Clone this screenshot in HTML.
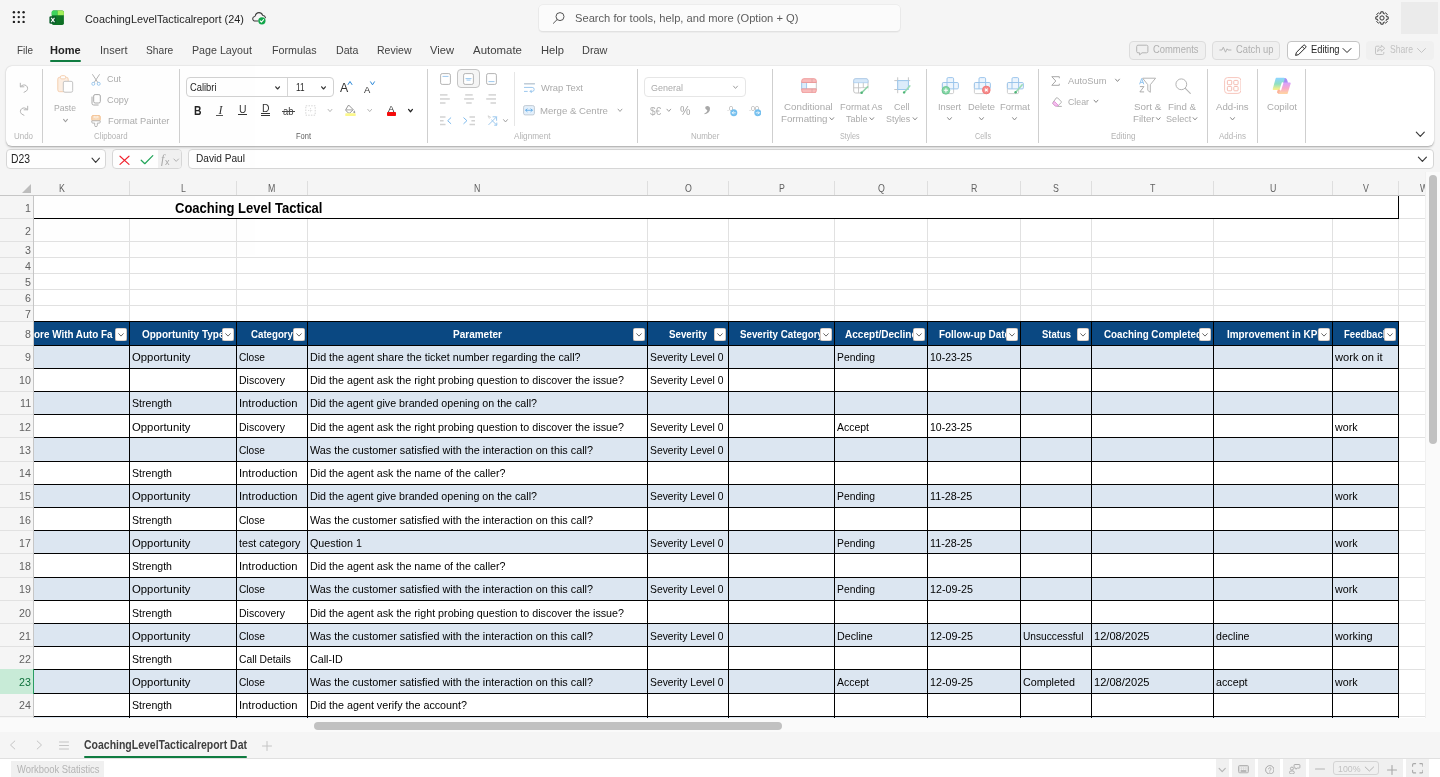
<!DOCTYPE html>
<html lang="en"><head><meta charset="utf-8"><title>CoachingLevelTacticalreport (24)</title>
<style>
html,body{margin:0;padding:0;background:#f5f5f5}
#app{position:absolute;left:0;top:0;width:1440px;height:777px;overflow:hidden;will-change:opacity;opacity:.9999}
body{width:1440px;height:777px;overflow:hidden;background:#f5f5f5;position:relative;font-family:"Liberation Sans",sans-serif;}
.b{position:absolute;box-sizing:border-box;display:block}
.t{position:absolute;white-space:nowrap;line-height:1;transform-origin:0 0;display:block}
</style></head>
<body>
<div id="app">
<svg class="b" style="left:0px;top:0px;" width="40" height="36" viewBox="0 0 40 36" fill="none"><circle cx="13.90" cy="12.30" r="1.2" fill="#1f1f1f"/><circle cx="18.75" cy="12.30" r="1.2" fill="#1f1f1f"/><circle cx="23.60" cy="12.30" r="1.2" fill="#1f1f1f"/><circle cx="13.90" cy="17.10" r="1.2" fill="#1f1f1f"/><circle cx="18.75" cy="17.10" r="1.2" fill="#1f1f1f"/><circle cx="23.60" cy="17.10" r="1.2" fill="#1f1f1f"/><circle cx="13.90" cy="21.90" r="1.2" fill="#1f1f1f"/><circle cx="18.75" cy="21.90" r="1.2" fill="#1f1f1f"/><circle cx="23.60" cy="21.90" r="1.2" fill="#1f1f1f"/></svg>
<svg class="b" style="left:48.5px;top:9.5px;" width="16" height="16" viewBox="0 0 16 16" fill="none"><defs><linearGradient id="xg" x1="0" y1="0" x2="1" y2="1"><stop offset="0" stop-color="#16872f"/><stop offset="1" stop-color="#0b6a22"/></linearGradient></defs><rect x="2.750" y=".4" width="12.150" height="14.500" rx="1.700" fill="url(#xg)"/><path d="M2.750 5.200V2.100a1.700 1.700 0 0 1 1.700-1.700H8.600v4.800z" fill="#3dd35d"/><path d="M8.600 .4h4.600a1.700 1.700 0 0 1 1.700 1.700v3.100H8.600z" fill="#a2ef5b"/><rect x=".4" y="6.300" width="6.900" height="7.400" rx="1.300" fill="#0c5e2c"/><path d="M2.200 7.900l3.300 4.200M5.500 7.900l-3.300 4.200" stroke="#fff" stroke-width="1.050"/></svg>
<span class="t " style="left:85.00px;top:13.60px;font-size:11.4px;color:#242424;transform:scaleX(0.9540);">CoachingLevelTacticalreport (24)</span>
<svg class="b" style="left:250px;top:9px;" width="18" height="16" viewBox="0 0 18 16" fill="none"><path d="M8 12H5.300C3.700 12 2.700 10.900 2.700 9.700c0-1.100.8-2 1.900-2.200.300-.1.500-.3.600-.6C5.700 4.900 7.200 3.600 9 3.600c1.600 0 3 1 3.500 2.400.1.300.4.500.7.600 1.100.2 2 1.100 2.300 2.200" stroke="#3a3a3a" stroke-width="1.050" stroke-linecap="round" stroke-linejoin="round"/><circle cx="11.900" cy="11.800" r="3.650" fill="#12a64a"/><path d="M10.200 11.900l1.200 1.200 2.200-2.500" stroke="#fff" stroke-width="1.050" stroke-linecap="round" stroke-linejoin="round"/></svg>
<div class="b " style="left:539px;top:5px;width:360.5px;height:26px;background:#fbfbfb;border-radius:4px;box-shadow:0 0 0 .6px #e6e6e6,0 1px 2px rgba(0,0,0,.14)"></div>
<svg class="b" style="left:552px;top:11px;" width="14" height="14" viewBox="0 0 14 14" fill="none"><circle cx="8" cy="5.6" r="4" stroke="#555" stroke-width="1"/><path d="M5.1 8.6L1.4 12.3" stroke="#555" stroke-width="1" stroke-linecap="round"/></svg>
<span class="t " style="left:575.00px;top:12.60px;font-size:11.4px;color:#5c5c5c;transform:scaleX(0.9788);">Search for tools, help, and more (Option + Q)</span>
<svg class="b" style="left:1375.4px;top:10.5px;" width="14" height="14" viewBox="0 0 14 14" fill="none"><circle cx="7" cy="7" r="2.1" stroke="#333" stroke-width="1"/><path d="M13.18 5.80L13.18 8.20L11.54 8.22L11.07 9.35L12.22 10.52L10.52 12.22L9.35 11.07L8.22 11.54L8.20 13.18L5.80 13.18L5.78 11.54L4.65 11.07L3.48 12.22L1.78 10.52L2.93 9.35L2.46 8.22L0.82 8.20L0.82 5.80L2.46 5.78L2.93 4.65L1.78 3.48L3.48 1.78L4.65 2.93L5.78 2.46L5.80 0.82L8.20 0.82L8.22 2.46L9.35 2.93L10.52 1.78L12.22 3.48L11.07 4.65L11.54 5.78Z" stroke="#333" stroke-width="1" stroke-linejoin="round"/></svg>
<div class="b " style="left:1401px;top:2px;width:37px;height:32px;background:#ebebeb"></div>
<span class="t " style="left:17.00px;top:44.60px;font-size:11.4px;color:#424242;transform:scaleX(0.8710);">File</span>
<span class="t " style="left:99.50px;top:44.60px;font-size:11.4px;color:#424242;transform:scaleX(0.9645);">Insert</span>
<span class="t " style="left:145.70px;top:44.60px;font-size:11.4px;color:#424242;transform:scaleX(0.8974);">Share</span>
<span class="t " style="left:192.00px;top:44.60px;font-size:11.4px;color:#424242;transform:scaleX(0.9372);">Page Layout</span>
<span class="t " style="left:272.00px;top:44.60px;font-size:11.4px;color:#424242;transform:scaleX(0.9408);">Formulas</span>
<span class="t " style="left:335.50px;top:44.60px;font-size:11.4px;color:#424242;transform:scaleX(0.9344);">Data</span>
<span class="t " style="left:377.00px;top:44.60px;font-size:11.4px;color:#424242;transform:scaleX(0.9230);">Review</span>
<span class="t " style="left:430.00px;top:44.60px;font-size:11.4px;color:#424242;transform:scaleX(0.9794);">View</span>
<span class="t " style="left:472.50px;top:44.60px;font-size:11.4px;color:#424242;transform:scaleX(1.0042);">Automate</span>
<span class="t " style="left:540.50px;top:44.60px;font-size:11.4px;color:#424242;transform:scaleX(0.9810);">Help</span>
<span class="t " style="left:582.00px;top:44.60px;font-size:11.4px;color:#424242;transform:scaleX(0.9585);">Draw</span>
<span class="t " style="left:50.00px;top:44.60px;font-size:11.4px;color:#242424;transform:scaleX(0.9693);font-weight:700;">Home</span>
<div class="b " style="left:50px;top:60px;width:31px;height:2.2px;background:#107c41;border-radius:1px"></div>
<div class="b " style="left:1129px;top:41px;width:77px;height:19px;background:#f0f0f0;border:1px solid #dcdcdc;border-radius:4px"></div>
<svg class="b" style="left:1136px;top:43.6px;" width="13" height="12" viewBox="0 0 13 12" fill="none"><path d="M2 1.2h8.6a1.3 1.3 0 0 1 1.3 1.3v5a1.3 1.3 0 0 1-1.3 1.3H6L3.6 10.9V8.8H2A1.3 1.3 0 0 1 .7 7.5v-5A1.3 1.3 0 0 1 2 1.2z" stroke="#b4b4b4" stroke-width="1" stroke-linejoin="round"/></svg>
<span class="t " style="left:1152.50px;top:43.80px;font-size:11px;color:#b0b0b0;transform:scaleX(0.8556);">Comments</span>
<div class="b " style="left:1212px;top:41px;width:68px;height:19px;background:#f0f0f0;border:1px solid #dcdcdc;border-radius:4px"></div>
<svg class="b" style="left:1219px;top:44.6px;" width="13" height="10" viewBox="0 0 13 10" fill="none"><path d="M.8 5h2.2l1.3-2.8 2.2 5 1.6-3.4.9 1.2h3" stroke="#b4b4b4" stroke-width="1" stroke-linejoin="round" stroke-linecap="round"/></svg>
<span class="t " style="left:1235.50px;top:43.80px;font-size:11px;color:#b0b0b0;transform:scaleX(0.8517);">Catch up</span>
<div class="b " style="left:1287px;top:41px;width:73px;height:19px;background:#fff;border:1px solid #c4c4c4;border-radius:4px"></div>
<svg class="b" style="left:1294px;top:44px;" width="13" height="13" viewBox="0 0 13 13" fill="none"><path d="M1.6 11.4l.8-3L9.3 1.5a1.3 1.3 0 0 1 1.9 0l.3.3a1.3 1.3 0 0 1 0 1.9L4.6 10.600z" stroke="#242424" stroke-width="1" stroke-linejoin="round"/><path d="M8.3 2.6l2.1 2.1" stroke="#242424" stroke-width="1"/></svg>
<span class="t " style="left:1310.50px;top:43.80px;font-size:11px;color:#242424;transform:scaleX(0.8473);">Editing</span>
<svg class="b" style="left:0;top:0" width="1440" height="777" viewBox="0 0 1440 777" fill="none"><path d="M1343.00 48.50L1347.00 52.50L1351.00 48.50" stroke="#242424" stroke-width="1" stroke-linecap="round" stroke-linejoin="round"/></svg>
<div class="b " style="left:1366px;top:41px;width:68px;height:19px;background:#f0f0f0;border-radius:4px"></div>
<svg class="b" style="left:1374.3px;top:43.8px;" width="12" height="12" viewBox="0 0 12 12" fill="none"><path d="M5 2.2H2.8A1.3 1.3 0 0 0 1.500 3.5v5.700a1.300 1.300 0 0 0 1.300 1.300h5.700a1.300 1.300 0 0 0 1.300-1.300V8.300" stroke="#c4c4c4" stroke-width="1" stroke-linecap="round"/><path d="M7.3 1.300l3.500 3-3.500 3V5.600C5.500 5.600 4.400 6.200 3.600 7.600c0-2.500 1.400-4.300 3.700-4.500z" stroke="#c4c4c4" stroke-width="1" stroke-linejoin="round"/></svg>
<span class="t " style="left:1390.00px;top:43.80px;font-size:11px;color:#c2c2c2;transform:scaleX(0.7835);">Share</span>
<svg class="b" style="left:0;top:0" width="1440" height="777" viewBox="0 0 1440 777" fill="none"><path d="M1417.50 48.50L1421.50 52.50L1425.50 48.50" stroke="#c4c4c4" stroke-width="1" stroke-linecap="round" stroke-linejoin="round"/></svg>
<div class="b " style="left:6px;top:149px;width:100px;height:20px;background:#fff;border:1px solid #d6d6d6;border-radius:4px"></div>
<span class="t " style="left:10.50px;top:153.30px;font-size:12px;color:#242424;transform:scaleX(0.8631);">D23</span>
<svg class="b" style="left:0;top:0" width="1440" height="777" viewBox="0 0 1440 777" fill="none"><path d="M92.00 158.20L95.70 162.40L99.40 158.20" stroke="#3a3a3a" stroke-width="1.1" stroke-linecap="round" stroke-linejoin="round"/></svg>
<div class="b " style="left:112px;top:149px;width:70px;height:20px;background:#fff;border:1px solid #d6d6d6;border-radius:4px;overflow:hidden"></div>
<div class="b " style="left:158px;top:150px;width:23px;height:18px;background:#f0f0f0;border-radius:0 3px 3px 0"></div>
<svg class="b" style="left:119px;top:154.5px;" width="12" height="11" viewBox="0 0 12 11" fill="none"><path d="M1 1.200l9 8.200M10 1.200L1 9.400" stroke="#f0202c" stroke-width="1.150" stroke-linecap="round"/></svg>
<svg class="b" style="left:139.5px;top:154px;" width="14" height="11" viewBox="0 0 14 11" fill="none"><path d="M1.200 6.200l3.600 3.500L12.800 1.600" stroke="#22a559" stroke-width="1.250" stroke-linecap="round" stroke-linejoin="round"/></svg>
<span class="t " style="left:161.00px;top:153.30px;font-size:12px;color:#a6a6a6;transform:scaleX(1.0000);font-style:italic;font-family:Liberation Serif,serif;">f</span>
<span class="t " style="left:165.00px;top:157.80px;font-size:9px;color:#a6a6a6;transform:scaleX(1.0000);">x</span>
<svg class="b" style="left:0;top:0" width="1440" height="777" viewBox="0 0 1440 777" fill="none"><path d="M173.90 159.00L176.20 161.40L178.50 159.00" stroke="#b0b0b0" stroke-width="1" stroke-linecap="round" stroke-linejoin="round"/></svg>
<div class="b " style="left:188px;top:149px;width:1246px;height:20px;background:#fff;border:1px solid #d6d6d6;border-radius:4px"></div>
<span class="t " style="left:196.00px;top:152.80px;font-size:11px;color:#242424;transform:scaleX(0.9211);">David Paul</span>
<svg class="b" style="left:0;top:0" width="1440" height="777" viewBox="0 0 1440 777" fill="none"><path d="M1418.40 157.15L1422.40 161.45L1426.40 157.15" stroke="#3a3a3a" stroke-width="1.15" stroke-linecap="round" stroke-linejoin="round"/></svg>
<div class="b " style="left:6px;top:66px;width:1428px;height:80px;background:#fff;border-radius:6px;box-shadow:0 .5px 1.5px rgba(0,0,0,.22),0 1.5px 3px rgba(0,0,0,.10)"></div>
<div class="b " style="left:42px;top:69px;width:1px;height:74px;background:#cfcfcf"></div>
<div class="b " style="left:179px;top:69px;width:1px;height:74px;background:#cfcfcf"></div>
<div class="b " style="left:427px;top:69px;width:1px;height:74px;background:#cfcfcf"></div>
<div class="b " style="left:637px;top:69px;width:1px;height:74px;background:#cfcfcf"></div>
<div class="b " style="left:772px;top:69px;width:1px;height:74px;background:#cfcfcf"></div>
<div class="b " style="left:926px;top:69px;width:1px;height:74px;background:#cfcfcf"></div>
<div class="b " style="left:1038px;top:69px;width:1px;height:74px;background:#cfcfcf"></div>
<div class="b " style="left:1207px;top:69px;width:1px;height:74px;background:#cfcfcf"></div>
<div class="b " style="left:1257px;top:69px;width:1px;height:74px;background:#cfcfcf"></div>
<div class="b " style="left:1305px;top:69px;width:1px;height:74px;background:#cfcfcf"></div>
<div class="b " style="left:514px;top:72px;width:1px;height:54px;background:#e6e6e6"></div>
<span class="t " style="left:14.00px;top:131.80px;font-size:9px;color:#b4b4b4;transform:scaleX(0.8831);">Undo</span>
<span class="t " style="left:93.50px;top:131.80px;font-size:9px;color:#b4b4b4;transform:scaleX(0.8696);">Clipboard</span>
<span class="t " style="left:295.70px;top:131.80px;font-size:9px;color:#616161;transform:scaleX(0.8329);">Font</span>
<span class="t " style="left:514.00px;top:131.80px;font-size:9px;color:#b4b4b4;transform:scaleX(0.9120);">Alignment</span>
<span class="t " style="left:690.70px;top:131.80px;font-size:9px;color:#b4b4b4;transform:scaleX(0.8841);">Number</span>
<span class="t " style="left:839.50px;top:131.80px;font-size:9px;color:#b4b4b4;transform:scaleX(0.7956);">Styles</span>
<span class="t " style="left:974.50px;top:131.80px;font-size:9px;color:#b4b4b4;transform:scaleX(0.7998);">Cells</span>
<span class="t " style="left:1110.50px;top:131.80px;font-size:9px;color:#b4b4b4;transform:scaleX(0.8903);">Editing</span>
<span class="t " style="left:1219.00px;top:131.80px;font-size:9px;color:#b4b4b4;transform:scaleX(0.8848);">Add-ins</span>
<svg class="b" style="left:19px;top:81.5px;" width="10" height="11" viewBox="0 0 10 11" fill="none"><path d="M1.300 1.200v3.600h3.600" stroke="#b4b4b4" stroke-width="1" stroke-linecap="round" stroke-linejoin="round"/><path d="M1.600 4.600C3 2.800 5.600 2.300 7.300 3.700c1.700 1.400 1.700 3.800.2 5.200L5 10.300" stroke="#b4b4b4" stroke-width="1" stroke-linecap="round"/></svg>
<svg class="b" style="left:19px;top:104.5px;" width="10" height="11" viewBox="0 0 10 11" fill="none"><path d="M8.700 1.200v3.600H5.100" stroke="#b4b4b4" stroke-width="1" stroke-linecap="round" stroke-linejoin="round"/><path d="M8.400 4.600C7 2.800 4.400 2.300 2.700 3.700 1 5.100 1 7.500 2.500 8.900L5 10.300" stroke="#b4b4b4" stroke-width="1" stroke-linecap="round"/></svg>
<svg class="b" style="left:56.5px;top:74.5px;" width="17" height="18" viewBox="0 0 17 18" fill="none"><rect x=".8" y="2.300" width="10.400" height="14.400" rx="1.800" fill="#fdeee2" stroke="#f6cfb0" stroke-width="1"/><rect x="3.300" y=".7" width="5.400" height="3.200" rx="1.500" fill="#fff" stroke="#f6cfb0" stroke-width="1"/><rect x="6.300" y="6.300" width="9.400" height="10.900" rx="1.600" fill="#fff" stroke="#c2c2c2" stroke-width="1"/></svg>
<span class="t " style="left:53.70px;top:103.00px;font-size:9.6px;color:#ababab;transform:scaleX(0.8962);">Paste</span>
<svg class="b" style="left:0;top:0" width="1440" height="777" viewBox="0 0 1440 777" fill="none"><path d="M63.60 119.45L65.50 121.75L67.40 119.45" stroke="#9c9c9c" stroke-width="1.1" stroke-linecap="round" stroke-linejoin="round"/></svg>
<svg class="b" style="left:90.5px;top:73.5px;" width="10" height="12" viewBox="0 0 10 12" fill="none"><path d="M1.600 .6l5.300 8M8.400 .6L3.100 8.600" stroke="#b4b4b4" stroke-width="1" stroke-linecap="round"/><circle cx="2.300" cy="9.800" r="1.500" stroke="#9cc8ee" stroke-width="1"/><circle cx="7.700" cy="9.800" r="1.500" stroke="#9cc8ee" stroke-width="1"/></svg>
<span class="t " style="left:107.00px;top:74.00px;font-size:9.6px;color:#ababab;transform:scaleX(0.9371);">Cut</span>
<svg class="b" style="left:90.5px;top:93.5px;" width="10" height="12" viewBox="0 0 10 12" fill="none"><rect x="2.700" y=".6" width="6.600" height="8.400" rx="1.400" stroke="#a8a8a8" stroke-width="1"/><path d="M1 3v6.300a1.700 1.700 0 0 0 1.700 1.700H7.200" stroke="#a8a8a8" stroke-width="1" stroke-linecap="round"/></svg>
<span class="t " style="left:107.00px;top:95.00px;font-size:9.6px;color:#ababab;transform:scaleX(0.9593);">Copy</span>
<svg class="b" style="left:90.5px;top:114.5px;" width="10" height="12" viewBox="0 0 10 12" fill="none"><rect x=".8" y=".6" width="8.400" height="5.200" rx="1" fill="#f9d9b8" stroke="#f3bd8c" stroke-width="1"/><path d="M3.200 .8v2M5 .8v2.600M6.800 .8v2" stroke="#fff" stroke-width=".8"/><path d="M.8 5.800h8.400v1.300a1 1 0 0 1-1 1H6.300v2.300a1.300 1.300 0 0 1-2.600 0V8.100H1.800a1 1 0 0 1-1-1z" fill="#fff" stroke="#b4b4b4" stroke-width="1" stroke-linejoin="round"/></svg>
<span class="t " style="left:107.50px;top:116.00px;font-size:9.6px;color:#ababab;transform:scaleX(0.9687);">Format Painter</span>
<div class="b " style="left:186px;top:77px;width:148px;height:20px;background:#fff;border:1px solid #d1d1d1;border-radius:4px"></div>
<div class="b " style="left:287px;top:78px;width:1px;height:18px;background:#d6d6d6"></div>
<span class="t " style="left:190.00px;top:82.05px;font-size:10.5px;color:#242424;transform:scaleX(0.8905);">Calibri</span>
<svg class="b" style="left:0;top:0" width="1440" height="777" viewBox="0 0 1440 777" fill="none"><path d="M275.70 86.80L277.60 89.00L279.50 86.80" stroke="#333" stroke-width="1.15" stroke-linecap="round" stroke-linejoin="round"/></svg>
<span class="t " style="left:295.50px;top:82.05px;font-size:10.5px;color:#242424;transform:scaleX(0.7798);">11</span>
<svg class="b" style="left:0;top:0" width="1440" height="777" viewBox="0 0 1440 777" fill="none"><path d="M321.60 86.80L323.50 89.00L325.40 86.80" stroke="#333" stroke-width="1.15" stroke-linecap="round" stroke-linejoin="round"/></svg>
<span class="t " style="left:340.40px;top:82.05px;font-size:12.5px;color:#333;transform:scaleX(0.9835);">A</span>
<svg class="b" style="left:0;top:0" width="1440" height="777" viewBox="0 0 1440 777" fill="none"><path d="M348.05 84.50L350.00 81.50L351.95 84.50" stroke="#2b88d8" stroke-width="1" stroke-linecap="round" stroke-linejoin="round"/></svg>
<span class="t " style="left:363.50px;top:84.90px;font-size:9.8px;color:#333;transform:scaleX(0.9638);">A</span>
<svg class="b" style="left:0;top:0" width="1440" height="777" viewBox="0 0 1440 777" fill="none"><path d="M370.55 81.80L372.50 84.80L374.45 81.80" stroke="#2b88d8" stroke-width="1" stroke-linecap="round" stroke-linejoin="round"/></svg>
<span class="t " style="left:193.50px;top:105.05px;font-size:12.5px;color:#242424;transform:scaleX(0.8308);font-weight:700;">B</span>
<span class="t " style="left:218.50px;top:104.30px;font-size:12px;color:#333;transform:scaleX(1.0000);font-style:italic;font-family:Liberation Serif,serif;">I</span>
<div class="b " style="left:216px;top:114.6px;width:7px;height:1px;background:#555"></div>
<span class="t " style="left:238.50px;top:104.05px;font-size:10.5px;color:#333;transform:scaleX(0.9891);">U</span>
<div class="b " style="left:237.7px;top:114.2px;width:9.2px;height:1px;background:#333"></div>
<span class="t " style="left:261.50px;top:103.05px;font-size:10.5px;color:#333;transform:scaleX(0.9891);">D</span>
<div class="b " style="left:260.5px;top:112.8px;width:9.5px;height:1px;background:#333"></div>
<div class="b " style="left:260.5px;top:114.8px;width:9.5px;height:1px;background:#333"></div>
<span class="t " style="left:283.00px;top:106.05px;font-size:10.5px;color:#444;transform:scaleX(0.8990);">ab</span>
<div class="b " style="left:282px;top:110.5px;width:12.5px;height:1px;background:#444"></div>
<svg class="b" style="left:304.5px;top:105px;" width="11" height="11" viewBox="0 0 11 11" fill="none"><rect x=".8" y=".8" width="9.400" height="9.400" stroke="#d6d6d6" stroke-width="1" stroke-dasharray="1.500 1.200"/><path d="M5.500 3v5M3 5.500h5" stroke="#dedede" stroke-width="1" stroke-dasharray="1.200 1.200"/></svg>
<svg class="b" style="left:0;top:0" width="1440" height="777" viewBox="0 0 1440 777" fill="none"><path d="M328.10 109.40L330.00 111.60L331.90 109.40" stroke="#b4b4b4" stroke-width="1" stroke-linecap="round" stroke-linejoin="round"/></svg>
<svg class="b" style="left:345px;top:104px;" width="11" height="12" viewBox="0 0 11 12" fill="none"><path d="M3.600 1l4.600 4.600-3.400 3.400a1 1 0 0 1-1.400 0L1 6.600a1 1 0 0 1 0-1.400z" fill="#fff" stroke="#8a8a8a" stroke-width=".9" stroke-linejoin="round"/><path d="M.9 5.900h7" stroke="#8a8a8a" stroke-width=".8"/><path d="M9.300 6.200c.6.900 1 1.500 1 2a1 1 0 0 1-2 0c0-.5.400-1.100 1-2z" fill="#a0a0a0"/><rect x=".3" y="9.300" width="10.400" height="2.700" rx=".6" fill="#fbf78c"/></svg>
<svg class="b" style="left:0;top:0" width="1440" height="777" viewBox="0 0 1440 777" fill="none"><path d="M367.80 109.40L369.70 111.60L371.60 109.40" stroke="#b4b4b4" stroke-width="1" stroke-linecap="round" stroke-linejoin="round"/></svg>
<span class="t " style="left:388.20px;top:104.65px;font-size:9.3px;color:#333;transform:scaleX(1.0156);">A</span>
<div class="b " style="left:386.5px;top:112.2px;width:9.6px;height:3.6px;background:#f40b0b;border-radius:.8px"></div>
<svg class="b" style="left:0;top:0" width="1440" height="777" viewBox="0 0 1440 777" fill="none"><path d="M408.55 109.45L410.50 111.75L412.45 109.45" stroke="#242424" stroke-width="1.25" stroke-linecap="round" stroke-linejoin="round"/></svg>
<svg class="b" style="left:440px;top:72.8px;" width="11" height="12" viewBox="0 0 11 12" fill="none"><rect x=".6" y=".6" width="9.800" height="10.800" rx="1.600" fill="#fff" stroke="#b4b4b4" stroke-width="1"/><path d="M2.500 3.4h6" stroke="#9cc8ee" stroke-width="1"/></svg>
<div class="b " style="left:457px;top:69px;width:23px;height:18.8px;background:#f5f5f5;border:1px solid #c4c4c4;border-radius:4px"></div>
<svg class="b" style="left:463px;top:72.8px;" width="11" height="12" viewBox="0 0 11 12" fill="none"><rect x=".6" y=".6" width="9.800" height="10.800" rx="1.600" fill="#fff" stroke="#b4b4b4" stroke-width="1"/><path d="M2.500 5.6h6" stroke="#9cc8ee" stroke-width="1"/><path d="M3.500 7.1h4" stroke="#9cc8ee" stroke-width="1"/></svg>
<svg class="b" style="left:485.5px;top:72.8px;" width="11" height="12" viewBox="0 0 11 12" fill="none"><rect x=".6" y=".6" width="9.800" height="10.800" rx="1.600" fill="#fff" stroke="#b4b4b4" stroke-width="1"/><path d="M2.500 8.6h6" stroke="#9cc8ee" stroke-width="1"/></svg>
<svg class="b" style="left:440.3px;top:93.6px;" width="10" height="10" viewBox="0 0 10 10" fill="none"><path d="M0.0 0.90h7.5" stroke="#d2d2d2" stroke-width="1.500"/><path d="M0.0 4.95h9.8" stroke="#d2d2d2" stroke-width="1.500"/><path d="M0.0 9.00h5.5" stroke="#d2d2d2" stroke-width="1.500"/></svg>
<svg class="b" style="left:463.5px;top:93.6px;" width="10" height="10" viewBox="0 0 10 10" fill="none"><path d="M1.2 0.90h7.5" stroke="#d2d2d2" stroke-width="1.500"/><path d="M0.1 4.95h9.8" stroke="#d2d2d2" stroke-width="1.500"/><path d="M2.2 9.00h5.5" stroke="#d2d2d2" stroke-width="1.500"/></svg>
<svg class="b" style="left:486.3px;top:93.6px;" width="10" height="10" viewBox="0 0 10 10" fill="none"><path d="M2.5 0.90h7.5" stroke="#d2d2d2" stroke-width="1.500"/><path d="M0.2 4.95h9.8" stroke="#d2d2d2" stroke-width="1.500"/><path d="M4.5 9.00h5.5" stroke="#d2d2d2" stroke-width="1.500"/></svg>
<svg class="b" style="left:440px;top:115.5px;" width="12" height="10" viewBox="0 0 12 10" fill="none"><path d="M0 .9h5.500M0 4.700h3.600M0 8.500h5.500" stroke="#d2d2d2" stroke-width="1.500"/><path d="M10.800 1.800L7.700 4.700l3.100 2.900" stroke="#7cb9ec" stroke-width="1" stroke-linecap="round" stroke-linejoin="round"/></svg>
<svg class="b" style="left:462.5px;top:115.5px;" width="12" height="10" viewBox="0 0 12 10" fill="none"><path d="M6.500 .9h5.500M8.400 4.700h3.600M6.500 8.500h5.500" stroke="#d2d2d2" stroke-width="1.500"/><path d="M.8 1.800l3.100 2.900L.8 7.600" stroke="#7cb9ec" stroke-width="1" stroke-linecap="round" stroke-linejoin="round"/></svg>
<svg class="b" style="left:486.5px;top:115px;" width="11" height="11" viewBox="0 0 11 11" fill="none"><path d="M1 .8l2.600 1.300-1.300 1.300z" stroke="#c8c8c8" stroke-width=".7"/><path d="M1.800 9.600L9.400 2M6 1.800h3.600v3.600" stroke="#9cc8ee" stroke-width="1" stroke-linecap="round" stroke-linejoin="round"/><path d="M4.600 5l5 5M7.600 10.200h2.200V8" stroke="#9cc8ee" stroke-width="1" stroke-linecap="round" stroke-linejoin="round"/></svg>
<svg class="b" style="left:0;top:0" width="1440" height="777" viewBox="0 0 1440 777" fill="none"><path d="M503.55 119.65L505.50 121.95L507.45 119.65" stroke="#a0a0a0" stroke-width="1" stroke-linecap="round" stroke-linejoin="round"/></svg>
<svg class="b" style="left:523.5px;top:82.5px;" width="11" height="10" viewBox="0 0 11 10" fill="none"><path d="M.3 .8h10.400M.3 4.400h7.900a2 2 0 0 1 0 4H6.300M.3 8.400h3" stroke="#9cc8ee" stroke-width="1" stroke-linecap="round"/><path d="M7.400 7.100L6.100 8.400l1.300 1.300" stroke="#9cc8ee" stroke-width="1" stroke-linecap="round" stroke-linejoin="round"/><path d="M.3 .8h10.400" stroke="#c8c8c8" stroke-width="1"/></svg>
<span class="t " style="left:540.50px;top:83.00px;font-size:9.6px;color:#ababab;transform:scaleX(0.9799);">Wrap Text</span>
<svg class="b" style="left:522.5px;top:105px;" width="12" height="10.5" viewBox="0 0 12 10.5" fill="none"><rect x=".6" y=".6" width="10.800" height="9.300" rx="1.600" fill="#e4f0fb" stroke="#c2cbd4" stroke-width="1"/><path d="M2.700 5.250h6.600M4.100 3.900L2.700 5.250l1.400 1.350M7.900 3.900l1.400 1.350L7.900 6.600" stroke="#5ea9e6" stroke-width=".9" stroke-linecap="round" stroke-linejoin="round"/></svg>
<span class="t " style="left:540.00px;top:106.00px;font-size:9.6px;color:#ababab;transform:scaleX(1.0035);">Merge &amp; Centre</span>
<svg class="b" style="left:0;top:0" width="1440" height="777" viewBox="0 0 1440 777" fill="none"><path d="M618.05 109.15L620.00 111.45L621.95 109.15" stroke="#a0a0a0" stroke-width="1" stroke-linecap="round" stroke-linejoin="round"/></svg>
<div class="b " style="left:644px;top:77px;width:102px;height:19.6px;background:#fff;border:1px solid #e6e6e6;border-radius:4px"></div>
<span class="t " style="left:651.00px;top:83.00px;font-size:9.6px;color:#ababab;transform:scaleX(0.9369);">General</span>
<svg class="b" style="left:0;top:0" width="1440" height="777" viewBox="0 0 1440 777" fill="none"><path d="M733.55 86.15L735.50 88.45L737.45 86.15" stroke="#a0a0a0" stroke-width="1" stroke-linecap="round" stroke-linejoin="round"/></svg>
<span class="t " style="left:649.50px;top:106.05px;font-size:10.5px;color:#b0b0b0;transform:scaleX(0.9589);">$€</span>
<svg class="b" style="left:0;top:0" width="1440" height="777" viewBox="0 0 1440 777" fill="none"><path d="M666.90 109.20L668.80 111.40L670.70 109.20" stroke="#a0a0a0" stroke-width="1" stroke-linecap="round" stroke-linejoin="round"/></svg>
<span class="t " style="left:680.00px;top:105.30px;font-size:12px;color:#a6a6a6;transform:scaleX(0.9841);">%</span>
<span class="t " style="left:704.30px;top:87.80px;font-size:27px;color:#a8a8a8;transform:scaleX(1.0000);font-weight:700;font-family:Liberation Serif,serif;">,</span>
<span class="t " style="left:727.00px;top:104.80px;font-size:8px;color:#b0b0b0;transform:scaleX(0.9293);">.0</span>
<svg class="b" style="left:730.4px;top:109.3px;" width="7.6" height="7.6" viewBox="0 0 7.6 7.6" fill="none"><circle cx="3.800" cy="3.800" r="3.500" fill="#74bfee"/><path d="M5.400 3.800H2.300M3.500 2.600L2.300 3.800l1.200 1.200" stroke="#fff" stroke-width=".8" stroke-linecap="round" stroke-linejoin="round"/></svg>
<span class="t " style="left:749.30px;top:104.80px;font-size:8px;color:#b0b0b0;transform:scaleX(0.8992);">.00</span>
<svg class="b" style="left:753.5px;top:109.3px;" width="7.6" height="7.6" viewBox="0 0 7.6 7.6" fill="none"><circle cx="3.800" cy="3.800" r="3.500" fill="#74bfee"/><path d="M2.200 3.800h3.100M4.100 2.600l1.200 1.200-1.200 1.200" stroke="#fff" stroke-width=".8" stroke-linecap="round" stroke-linejoin="round"/></svg>
<svg class="b" style="left:800.5px;top:77.7px;" width="16" height="15.6" viewBox="0 0 16 15.6" fill="none"><rect x=".7" y="4.500" width="14.600" height="6.400" fill="#fff" stroke="#c6c6c6" stroke-width=".9"/><rect x=".7" y="4.500" width="4.900" height="6.400" fill="#dcecfa" stroke="#9cc8ee" stroke-width=".9"/><path d="M.7 4.500V2.900a2.200 2.200 0 0 1 2.200-2.200h10.200a2.200 2.200 0 0 1 2.200 2.200v1.600z" fill="#f8bcbc" stroke="#ee9696" stroke-width=".9"/><path d="M.7 10.900v1.800a2.200 2.200 0 0 0 2.200 2.200h10.200a2.200 2.200 0 0 0 2.200-2.200v-1.800z" fill="#f8bcbc" stroke="#ee9696" stroke-width=".9"/><path d="M11 .9v3.600M11 10.900v3.800" stroke="#d9a3a3" stroke-width=".8"/></svg>
<span class="t " style="left:783.70px;top:102.00px;font-size:9.6px;color:#ababab;transform:scaleX(1.0159);">Conditional</span>
<span class="t " style="left:781.00px;top:114.00px;font-size:9.6px;color:#ababab;transform:scaleX(1.0135);">Formatting</span>
<svg class="b" style="left:0;top:0" width="1440" height="777" viewBox="0 0 1440 777" fill="none"><path d="M829.90 117.70L831.80 119.90L833.70 117.70" stroke="#8a8a8a" stroke-width="1" stroke-linecap="round" stroke-linejoin="round"/></svg>
<svg class="b" style="left:853px;top:77.5px;" width="17" height="16" viewBox="0 0 17 16" fill="none"><rect x=".7" y=".7" width="14.300" height="14.300" rx="2" fill="#fff" stroke="#c4c4c4" stroke-width="1"/><path d="M.7 2.700a2 2 0 0 1 2-2H13a2 2 0 0 1 2 2v2H.7z" fill="#d6e8f9" stroke="#a9cdf0" stroke-width=".8"/><path d="M.7 9.800H15M5.500 4.700V15M10.300 4.700V10" stroke="#c4c4c4" stroke-width=".9"/><rect x="7.800" y="10.400" width="8" height="5.600" fill="#fff"/><path d="M8.800 14.600L14.600 8.800" stroke="#8fd3a8" stroke-width="1.500" stroke-linecap="round"/><circle cx="8.600" cy="14.700" r="1.300" fill="#4fb477"/></svg>
<span class="t " style="left:839.50px;top:102.00px;font-size:9.6px;color:#ababab;transform:scaleX(0.9715);">Format As</span>
<span class="t " style="left:846.00px;top:114.00px;font-size:9.6px;color:#ababab;transform:scaleX(0.9368);">Table</span>
<svg class="b" style="left:0;top:0" width="1440" height="777" viewBox="0 0 1440 777" fill="none"><path d="M869.90 117.70L871.80 119.90L873.70 117.70" stroke="#8a8a8a" stroke-width="1" stroke-linecap="round" stroke-linejoin="round"/></svg>
<svg class="b" style="left:893.5px;top:77px;" width="17" height="17" viewBox="0 0 17 17" fill="none"><path d="M3.700 .3v15.900M14.400 .3v9.500M.3 3.600h15.900M.3 12.500h9.500" stroke="#c6c6c6" stroke-width="1"/><rect x="3.700" y="3.600" width="10.700" height="8.900" fill="#dcecfa" stroke="#9cc8ee" stroke-width="1"/><path d="M10.400 15.200L15.800 8.900" stroke="#9bdcb4" stroke-width="1.600" stroke-linecap="round"/><circle cx="10.100" cy="15.400" r="1.200" fill="#4fb477"/></svg>
<span class="t " style="left:894.00px;top:102.00px;font-size:9.6px;color:#ababab;transform:scaleX(0.9372);">Cell</span>
<span class="t " style="left:885.70px;top:114.00px;font-size:9.6px;color:#ababab;transform:scaleX(0.9295);">Styles</span>
<svg class="b" style="left:0;top:0" width="1440" height="777" viewBox="0 0 1440 777" fill="none"><path d="M913.10 117.70L915.00 119.90L916.90 117.70" stroke="#8a8a8a" stroke-width="1" stroke-linecap="round" stroke-linejoin="round"/></svg>
<svg class="b" style="left:940.5px;top:77px;" width="19" height="18" viewBox="0 0 19 18" fill="none"><rect x="1.400" y="5.500" width="11.200" height="11.100" rx="1.300" fill="#fff" stroke="#c8c8c8" stroke-width=".9"/><path d="M6 5.500V1.800a1.200 1.200 0 0 1 1.200-1.200h4.200a1.200 1.200 0 0 1 1.200 1.200v3.700h3.600a1.200 1.200 0 0 1 1.200 1.200v4a1.200 1.200 0 0 1-1.200 1.200H2.600a1.200 1.200 0 0 1-1.200-1.200v-4a1.200 1.200 0 0 1 1.200-1.200z" fill="#edf5fd" stroke="#93c1ea" stroke-width=".9" stroke-linejoin="round"/><path d="M6 5.500v6.300M12.600 5.500v6.300M6 5.500h6.600" stroke="#93c1ea" stroke-width=".9"/><circle cx="4.900" cy="13.300" r="3.900" fill="#86d6a6" stroke="#5cc088" stroke-width=".7"/><path d="M4.900 11.200v4.200M2.800 13.300h4.200" stroke="#fff" stroke-width="1.100"/></svg>
<span class="t " style="left:937.50px;top:102.00px;font-size:9.6px;color:#ababab;transform:scaleX(0.9663);">Insert</span>
<svg class="b" style="left:0;top:0" width="1440" height="777" viewBox="0 0 1440 777" fill="none"><path d="M947.55 117.65L949.50 119.95L951.45 117.65" stroke="#8a8a8a" stroke-width="1" stroke-linecap="round" stroke-linejoin="round"/></svg>
<svg class="b" style="left:972.5px;top:77px;" width="19" height="18" viewBox="0 0 19 18" fill="none"><rect x="1.400" y="5.500" width="11.200" height="11.100" rx="1.300" fill="#fff" stroke="#c8c8c8" stroke-width=".9"/><path d="M6 5.500V1.800a1.200 1.200 0 0 1 1.200-1.200h4.200a1.200 1.200 0 0 1 1.200 1.200v3.700h3.600a1.200 1.200 0 0 1 1.200 1.200v4a1.200 1.200 0 0 1-1.200 1.200H2.600a1.200 1.200 0 0 1-1.200-1.200v-4a1.200 1.200 0 0 1 1.200-1.200z" fill="#edf5fd" stroke="#93c1ea" stroke-width=".9" stroke-linejoin="round"/><path d="M6 5.500v6.300M12.600 5.500v6.300M6 5.500h6.600" stroke="#93c1ea" stroke-width=".9"/><circle cx="13.300" cy="13" r="3.900" fill="#f58a8a" stroke="#ee6f6f" stroke-width=".7"/><path d="M11.900 11.600l2.800 2.800M14.700 11.600l-2.800 2.800" stroke="#fff" stroke-width="1.100"/></svg>
<span class="t " style="left:968.00px;top:102.00px;font-size:9.6px;color:#ababab;transform:scaleX(0.9729);">Delete</span>
<svg class="b" style="left:0;top:0" width="1440" height="777" viewBox="0 0 1440 777" fill="none"><path d="M979.55 117.65L981.50 119.95L983.45 117.65" stroke="#8a8a8a" stroke-width="1" stroke-linecap="round" stroke-linejoin="round"/></svg>
<svg class="b" style="left:1005.5px;top:77px;" width="19" height="18" viewBox="0 0 19 18" fill="none"><rect x="1.400" y="5.500" width="11.200" height="11.100" rx="1.300" fill="#fff" stroke="#c8c8c8" stroke-width=".9"/><path d="M6 5.500V1.800a1.200 1.200 0 0 1 1.200-1.200h4.200a1.200 1.200 0 0 1 1.200 1.200v3.700h3.600a1.200 1.200 0 0 1 1.200 1.200v4a1.200 1.200 0 0 1-1.200 1.200H2.600a1.200 1.200 0 0 1-1.200-1.200v-4a1.200 1.200 0 0 1 1.200-1.200z" fill="#edf5fd" stroke="#93c1ea" stroke-width=".9" stroke-linejoin="round"/><path d="M6 5.500v6.300M12.600 5.500v6.300M6 5.500h6.600" stroke="#93c1ea" stroke-width=".9"/><path d="M9.900 15l6.300-7.200" stroke="#9bdcb4" stroke-width="1.600" stroke-linecap="round"/><circle cx="9.600" cy="15.200" r="1.200" fill="#4fb477"/></svg>
<span class="t " style="left:1000.00px;top:102.00px;font-size:9.6px;color:#ababab;transform:scaleX(0.9867);">Format</span>
<svg class="b" style="left:0;top:0" width="1440" height="777" viewBox="0 0 1440 777" fill="none"><path d="M1012.55 117.65L1014.50 119.95L1016.45 117.65" stroke="#8a8a8a" stroke-width="1" stroke-linecap="round" stroke-linejoin="round"/></svg>
<svg class="b" style="left:1050.5px;top:75.5px;" width="9" height="10" viewBox="0 0 9 10" fill="none"><path d="M8.300 1.900V.7H.8l4 4.300-4 4.300h7.500V8.100" stroke="#a8a8a8" stroke-width="1" stroke-linejoin="round" stroke-linecap="round"/></svg>
<span class="t " style="left:1067.50px;top:76.00px;font-size:9.6px;color:#ababab;transform:scaleX(0.9750);">AutoSum</span>
<svg class="b" style="left:0;top:0" width="1440" height="777" viewBox="0 0 1440 777" fill="none"><path d="M1115.55 79.15L1117.50 81.45L1119.45 79.15" stroke="#8a8a8a" stroke-width="1" stroke-linecap="round" stroke-linejoin="round"/></svg>
<svg class="b" style="left:1051.5px;top:96.5px;" width="10" height="10" viewBox="0 0 10 10" fill="none"><path d="M5.600 .9l3.500 3.500a.9.900 0 0 1 0 1.300L5.800 9H3.300L1 6.700a.9.900 0 0 1 0-1.300L4.300.9a.9.900 0 0 1 1.300 0z" stroke="#a8a8a8" stroke-width=".9" stroke-linejoin="round"/><path d="M2.100 4.400l3.600 3.600" stroke="#e27fd6" stroke-width=".9"/><path d="M1 6.700l2.300 2.300h2.500l.6-.6-3.800-3.800-1.600 1.600a.9.900 0 0 0 0 .5z" fill="#f3c3ee" stroke="#e27fd6" stroke-width=".7" stroke-linejoin="round"/><path d="M5.800 9.400h3.600" stroke="#a8a8a8" stroke-width=".9" stroke-linecap="round"/></svg>
<span class="t " style="left:1068.00px;top:97.00px;font-size:9.6px;color:#ababab;transform:scaleX(0.9154);">Clear</span>
<svg class="b" style="left:0;top:0" width="1440" height="777" viewBox="0 0 1440 777" fill="none"><path d="M1094.10 100.20L1096.00 102.40L1097.90 100.20" stroke="#8a8a8a" stroke-width="1" stroke-linecap="round" stroke-linejoin="round"/></svg>
<svg class="b" style="left:1139px;top:77px;" width="18" height="17.5" viewBox="0 0 18 17.5" fill="none"><path d="M3.600 1.200h13l-5.300 6.500v7.600l-2.500-1.900V7.700z" stroke="#b4b4b4" stroke-width="1" stroke-linejoin="round" fill="#fff"/><path d="M.6 7.300L2.700 1.500l2.100 5.800M1.300 5.400h2.800" stroke="#8ec3f0" stroke-width=".95" stroke-linejoin="round" fill="none"/><path d="M.9 9.600h4l-4 5.300h4.200" stroke="#a8a8a8" stroke-width=".95" stroke-linejoin="round" fill="none"/></svg>
<span class="t " style="left:1133.70px;top:102.00px;font-size:9.6px;color:#ababab;transform:scaleX(1.0233);">Sort &amp;</span>
<span class="t " style="left:1133.00px;top:114.00px;font-size:9.6px;color:#ababab;transform:scaleX(1.0078);">Filter</span>
<svg class="b" style="left:0;top:0" width="1440" height="777" viewBox="0 0 1440 777" fill="none"><path d="M1156.40 117.70L1158.30 119.90L1160.20 117.70" stroke="#8a8a8a" stroke-width="1" stroke-linecap="round" stroke-linejoin="round"/></svg>
<svg class="b" style="left:1175px;top:77.5px;" width="16" height="16" viewBox="0 0 16 16" fill="none"><circle cx="6.300" cy="6.300" r="5.400" stroke="#b4b4b4" stroke-width="1"/><path d="M10.300 10.300l5 5" stroke="#b4b4b4" stroke-width="1.100" stroke-linecap="round"/></svg>
<span class="t " style="left:1168.00px;top:102.00px;font-size:9.6px;color:#ababab;transform:scaleX(1.0091);">Find &amp;</span>
<span class="t " style="left:1165.70px;top:114.00px;font-size:9.6px;color:#ababab;transform:scaleX(0.9482);">Select</span>
<svg class="b" style="left:0;top:0" width="1440" height="777" viewBox="0 0 1440 777" fill="none"><path d="M1193.10 117.70L1195.00 119.90L1196.90 117.70" stroke="#8a8a8a" stroke-width="1" stroke-linecap="round" stroke-linejoin="round"/></svg>
<svg class="b" style="left:1223.5px;top:76.5px;" width="17.5" height="17" viewBox="0 0 17.5 17" fill="none"><rect x=".6" y=".6" width="16.300" height="15.800" rx="3" stroke="#f7c6bd" stroke-width="1" fill="#fff"/><rect x="3.400" y="3.400" width="4.300" height="4.300" rx=".8" stroke="#f4b5aa" stroke-width=".9"/><rect x="9.800" y="3.400" width="4.300" height="4.300" rx=".8" stroke="#f4b5aa" stroke-width=".9"/><rect x="3.400" y="9.500" width="4.300" height="4.300" rx=".8" stroke="#f4b5aa" stroke-width=".9"/><rect x="9.800" y="9.500" width="4.300" height="4.300" rx=".8" stroke="#f4b5aa" stroke-width=".9"/></svg>
<span class="t " style="left:1216.00px;top:102.00px;font-size:9.6px;color:#ababab;transform:scaleX(1.0046);">Add-ins</span>
<svg class="b" style="left:0;top:0" width="1440" height="777" viewBox="0 0 1440 777" fill="none"><path d="M1230.55 117.65L1232.50 119.95L1234.45 117.65" stroke="#8a8a8a" stroke-width="1" stroke-linecap="round" stroke-linejoin="round"/></svg>
<svg class="b" style="left:1272px;top:76.5px;" width="19" height="18" viewBox="0 0 19 18" fill="none"><defs><linearGradient id="cg1" x1="0" y1="0" x2="0" y2="1"><stop offset="0" stop-color="#8ed6fc"/><stop offset=".5" stop-color="#8fe0c2"/><stop offset="1" stop-color="#f6f08c"/></linearGradient><linearGradient id="cg2" x1="0" y1="0" x2="0" y2="1"><stop offset="0" stop-color="#d9a2f9"/><stop offset=".5" stop-color="#f8a8cc"/><stop offset="1" stop-color="#ffd2a4"/></linearGradient></defs><path d="M10.600 1.600h2.100c1 0 1.600.6 1.900 1.500l.7 2.300h-4z" fill="#a990f2" stroke="#a990f2" stroke-width="1.200" stroke-linejoin="round"/><path d="M4.400 1.600h7.600L8.800 12.200H1.500z" fill="url(#cg1)" stroke="url(#cg1)" stroke-width="1.600" stroke-linejoin="round"/><path d="M6.400 16.300h2.400l1-3.300H6.200l-.6 1.900c-.2.700.2 1.400.8 1.400z" fill="#fdb49a" stroke="#fdb49a" stroke-width="1" stroke-linejoin="round"/><path d="M11.300 6.200h6.600l-3 10h-7z" fill="url(#cg2)" stroke="url(#cg2)" stroke-width="1.600" stroke-linejoin="round"/><path d="M10.500 6l-2 6.600" stroke="#fff" stroke-width="1.700" stroke-linecap="round"/></svg>
<span class="t " style="left:1266.70px;top:102.00px;font-size:9.6px;color:#ababab;transform:scaleX(1.0039);">Copilot</span>
<svg class="b" style="left:0;top:0" width="1440" height="777" viewBox="0 0 1440 777" fill="none"><path d="M1416.30 132.15L1420.30 136.45L1424.30 132.15" stroke="#3a3a3a" stroke-width="1.15" stroke-linecap="round" stroke-linejoin="round"/></svg>
<div class="b " style="left:34px;top:196px;width:1391px;height:522px;background:#fff"></div>
<div class="b " style="left:129px;top:196px;width:1px;height:522px;background:#e1e1e1"></div>
<div class="b " style="left:236px;top:196px;width:1px;height:522px;background:#e1e1e1"></div>
<div class="b " style="left:307px;top:196px;width:1px;height:522px;background:#e1e1e1"></div>
<div class="b " style="left:647px;top:196px;width:1px;height:522px;background:#e1e1e1"></div>
<div class="b " style="left:728px;top:196px;width:1px;height:522px;background:#e1e1e1"></div>
<div class="b " style="left:834px;top:196px;width:1px;height:522px;background:#e1e1e1"></div>
<div class="b " style="left:927px;top:196px;width:1px;height:522px;background:#e1e1e1"></div>
<div class="b " style="left:1020px;top:196px;width:1px;height:522px;background:#e1e1e1"></div>
<div class="b " style="left:1091px;top:196px;width:1px;height:522px;background:#e1e1e1"></div>
<div class="b " style="left:1213px;top:196px;width:1px;height:522px;background:#e1e1e1"></div>
<div class="b " style="left:1332px;top:196px;width:1px;height:522px;background:#e1e1e1"></div>
<div class="b " style="left:1398px;top:196px;width:1px;height:522px;background:#e1e1e1"></div>
<div class="b " style="left:1425px;top:196px;width:1px;height:522px;background:#e1e1e1"></div>
<div class="b " style="left:0px;top:218px;width:1425px;height:1px;background:#e1e1e1"></div>
<div class="b " style="left:0px;top:241px;width:1425px;height:1px;background:#e1e1e1"></div>
<div class="b " style="left:0px;top:257px;width:1425px;height:1px;background:#e1e1e1"></div>
<div class="b " style="left:0px;top:273px;width:1425px;height:1px;background:#e1e1e1"></div>
<div class="b " style="left:0px;top:289px;width:1425px;height:1px;background:#e1e1e1"></div>
<div class="b " style="left:0px;top:305px;width:1425px;height:1px;background:#e1e1e1"></div>
<div class="b " style="left:0px;top:321px;width:1425px;height:1px;background:#e1e1e1"></div>
<div class="b " style="left:0px;top:345px;width:1425px;height:1px;background:#e1e1e1"></div>
<div class="b " style="left:0px;top:368px;width:1425px;height:1px;background:#e1e1e1"></div>
<div class="b " style="left:0px;top:391px;width:1425px;height:1px;background:#e1e1e1"></div>
<div class="b " style="left:0px;top:414px;width:1425px;height:1px;background:#e1e1e1"></div>
<div class="b " style="left:0px;top:437px;width:1425px;height:1px;background:#e1e1e1"></div>
<div class="b " style="left:0px;top:461px;width:1425px;height:1px;background:#e1e1e1"></div>
<div class="b " style="left:0px;top:484px;width:1425px;height:1px;background:#e1e1e1"></div>
<div class="b " style="left:0px;top:507px;width:1425px;height:1px;background:#e1e1e1"></div>
<div class="b " style="left:0px;top:530px;width:1425px;height:1px;background:#e1e1e1"></div>
<div class="b " style="left:0px;top:553px;width:1425px;height:1px;background:#e1e1e1"></div>
<div class="b " style="left:0px;top:577px;width:1425px;height:1px;background:#e1e1e1"></div>
<div class="b " style="left:0px;top:600px;width:1425px;height:1px;background:#e1e1e1"></div>
<div class="b " style="left:0px;top:623px;width:1425px;height:1px;background:#e1e1e1"></div>
<div class="b " style="left:0px;top:646px;width:1425px;height:1px;background:#e1e1e1"></div>
<div class="b " style="left:0px;top:669px;width:1425px;height:1px;background:#e1e1e1"></div>
<div class="b " style="left:0px;top:693px;width:1425px;height:1px;background:#e1e1e1"></div>
<div class="b " style="left:0px;top:716px;width:1425px;height:1px;background:#e1e1e1"></div>
<div class="b " style="left:34px;top:196px;width:1364px;height:22px;background:#fff"></div>
<div class="b " style="left:34px;top:218px;width:1365px;height:1px;background:#000"></div>
<div class="b " style="left:1398px;top:195px;width:1px;height:24px;background:#000"></div>
<div class="b " style="left:0px;top:178px;width:1440px;height:17px;background:#f5f5f5"></div>
<div class="b " style="left:0px;top:195px;width:1425px;height:1px;background:#c6c6c6"></div>
<div class="b " style="left:129px;top:181px;width:1px;height:14px;background:#dedede"></div>
<div class="b " style="left:236px;top:181px;width:1px;height:14px;background:#dedede"></div>
<div class="b " style="left:307px;top:181px;width:1px;height:14px;background:#dedede"></div>
<div class="b " style="left:647px;top:181px;width:1px;height:14px;background:#dedede"></div>
<div class="b " style="left:728px;top:181px;width:1px;height:14px;background:#dedede"></div>
<div class="b " style="left:834px;top:181px;width:1px;height:14px;background:#dedede"></div>
<div class="b " style="left:927px;top:181px;width:1px;height:14px;background:#dedede"></div>
<div class="b " style="left:1020px;top:181px;width:1px;height:14px;background:#dedede"></div>
<div class="b " style="left:1091px;top:181px;width:1px;height:14px;background:#dedede"></div>
<div class="b " style="left:1213px;top:181px;width:1px;height:14px;background:#dedede"></div>
<div class="b " style="left:1332px;top:181px;width:1px;height:14px;background:#dedede"></div>
<div class="b " style="left:1398px;top:181px;width:1px;height:14px;background:#dedede"></div>
<svg class="b" style="left:22px;top:184px;" width="9" height="9" viewBox="0 0 9 9" fill="none"><path d="M9 0v9H0z" fill="#bdbdbd"/></svg>
<span class="t " style="left:59.37px;top:182.80px;font-size:11px;color:#616161;transform:scaleX(0.8000);">K</span>
<span class="t " style="left:180.55px;top:182.80px;font-size:11px;color:#616161;transform:scaleX(0.8000);">L</span>
<span class="t " style="left:268.33px;top:182.80px;font-size:11px;color:#616161;transform:scaleX(0.8000);">M</span>
<span class="t " style="left:474.32px;top:182.80px;font-size:11px;color:#616161;transform:scaleX(0.8000);">N</span>
<span class="t " style="left:684.58px;top:182.80px;font-size:11px;color:#616161;transform:scaleX(0.8000);">O</span>
<span class="t " style="left:778.57px;top:182.80px;font-size:11px;color:#616161;transform:scaleX(0.8000);">P</span>
<span class="t " style="left:877.58px;top:182.80px;font-size:11px;color:#616161;transform:scaleX(0.8000);">Q</span>
<span class="t " style="left:970.82px;top:182.80px;font-size:11px;color:#616161;transform:scaleX(0.8000);">R</span>
<span class="t " style="left:1053.07px;top:182.80px;font-size:11px;color:#616161;transform:scaleX(0.8000);">S</span>
<span class="t " style="left:1149.81px;top:182.80px;font-size:11px;color:#616161;transform:scaleX(0.8000);">T</span>
<span class="t " style="left:1269.82px;top:182.80px;font-size:11px;color:#616161;transform:scaleX(0.8000);">U</span>
<span class="t " style="left:1362.57px;top:182.80px;font-size:11px;color:#616161;transform:scaleX(0.8000);">V</span>
<div class="b" style="left:1419.5px;top:181px;width:5.5px;height:14px;overflow:hidden">
<span class="t " style="left:0.00px;top:1.80px;font-size:11px;color:#616161;transform:scaleX(0.8000);">W</span>
</div>
<div class="b " style="left:0px;top:196px;width:33px;height:522px;background:#f5f5f5"></div>
<div class="b " style="left:33px;top:196px;width:1px;height:522px;background:#c6c6c6"></div>
<div class="b " style="left:0px;top:218px;width:33px;height:1px;background:#e1e1e1"></div>
<span class="t " style="left:24.67px;top:202.80px;font-size:11px;color:#616161;transform:scaleX(0.9700);">1</span>
<div class="b " style="left:0px;top:241px;width:33px;height:1px;background:#e1e1e1"></div>
<span class="t " style="left:24.67px;top:225.80px;font-size:11px;color:#616161;transform:scaleX(0.9700);">2</span>
<div class="b " style="left:0px;top:257px;width:33px;height:1px;background:#e1e1e1"></div>
<span class="t " style="left:24.67px;top:244.80px;font-size:11px;color:#616161;transform:scaleX(0.9700);">3</span>
<div class="b " style="left:0px;top:273px;width:33px;height:1px;background:#e1e1e1"></div>
<span class="t " style="left:24.67px;top:260.80px;font-size:11px;color:#616161;transform:scaleX(0.9700);">4</span>
<div class="b " style="left:0px;top:289px;width:33px;height:1px;background:#e1e1e1"></div>
<span class="t " style="left:24.67px;top:276.80px;font-size:11px;color:#616161;transform:scaleX(0.9700);">5</span>
<div class="b " style="left:0px;top:305px;width:33px;height:1px;background:#e1e1e1"></div>
<span class="t " style="left:24.67px;top:292.80px;font-size:11px;color:#616161;transform:scaleX(0.9700);">6</span>
<div class="b " style="left:0px;top:321px;width:33px;height:1px;background:#e1e1e1"></div>
<span class="t " style="left:24.67px;top:308.80px;font-size:11px;color:#616161;transform:scaleX(0.9700);">7</span>
<div class="b " style="left:0px;top:345px;width:33px;height:1px;background:#e1e1e1"></div>
<span class="t " style="left:24.67px;top:328.80px;font-size:11px;color:#616161;transform:scaleX(0.9700);">8</span>
<div class="b " style="left:0px;top:368px;width:33px;height:1px;background:#e1e1e1"></div>
<span class="t " style="left:24.67px;top:351.80px;font-size:11px;color:#616161;transform:scaleX(0.9700);">9</span>
<div class="b " style="left:0px;top:391px;width:33px;height:1px;background:#e1e1e1"></div>
<span class="t " style="left:18.73px;top:374.80px;font-size:11px;color:#616161;transform:scaleX(0.9700);">10</span>
<div class="b " style="left:0px;top:414px;width:33px;height:1px;background:#e1e1e1"></div>
<span class="t " style="left:19.52px;top:397.80px;font-size:11px;color:#616161;transform:scaleX(0.9700);">11</span>
<div class="b " style="left:0px;top:437px;width:33px;height:1px;background:#e1e1e1"></div>
<span class="t " style="left:18.73px;top:421.80px;font-size:11px;color:#616161;transform:scaleX(0.9700);">12</span>
<div class="b " style="left:0px;top:461px;width:33px;height:1px;background:#e1e1e1"></div>
<span class="t " style="left:18.73px;top:444.80px;font-size:11px;color:#616161;transform:scaleX(0.9700);">13</span>
<div class="b " style="left:0px;top:484px;width:33px;height:1px;background:#e1e1e1"></div>
<span class="t " style="left:18.73px;top:467.80px;font-size:11px;color:#616161;transform:scaleX(0.9700);">14</span>
<div class="b " style="left:0px;top:507px;width:33px;height:1px;background:#e1e1e1"></div>
<span class="t " style="left:18.73px;top:490.80px;font-size:11px;color:#616161;transform:scaleX(0.9700);">15</span>
<div class="b " style="left:0px;top:530px;width:33px;height:1px;background:#e1e1e1"></div>
<span class="t " style="left:18.73px;top:514.80px;font-size:11px;color:#616161;transform:scaleX(0.9700);">16</span>
<div class="b " style="left:0px;top:553px;width:33px;height:1px;background:#e1e1e1"></div>
<span class="t " style="left:18.73px;top:537.80px;font-size:11px;color:#616161;transform:scaleX(0.9700);">17</span>
<div class="b " style="left:0px;top:577px;width:33px;height:1px;background:#e1e1e1"></div>
<span class="t " style="left:18.73px;top:560.80px;font-size:11px;color:#616161;transform:scaleX(0.9700);">18</span>
<div class="b " style="left:0px;top:600px;width:33px;height:1px;background:#e1e1e1"></div>
<span class="t " style="left:18.73px;top:583.80px;font-size:11px;color:#616161;transform:scaleX(0.9700);">19</span>
<div class="b " style="left:0px;top:623px;width:33px;height:1px;background:#e1e1e1"></div>
<span class="t " style="left:18.73px;top:607.80px;font-size:11px;color:#616161;transform:scaleX(0.9700);">20</span>
<div class="b " style="left:0px;top:646px;width:33px;height:1px;background:#e1e1e1"></div>
<span class="t " style="left:18.73px;top:630.80px;font-size:11px;color:#616161;transform:scaleX(0.9700);">21</span>
<span class="t " style="left:18.73px;top:653.80px;font-size:11px;color:#616161;transform:scaleX(0.9700);">22</span>
<div class="b " style="left:0px;top:669px;width:33px;height:25px;background:#c8ebd7"></div>
<div class="b " style="left:33px;top:669px;width:1px;height:25px;background:#2a9d63"></div>
<span class="t " style="left:18.73px;top:676.80px;font-size:11px;color:#0e703a;transform:scaleX(0.9700);">23</span>
<div class="b " style="left:0px;top:716px;width:33px;height:1px;background:#e1e1e1"></div>
<span class="t " style="left:18.73px;top:699.80px;font-size:11px;color:#616161;transform:scaleX(0.9700);">24</span>
<div class="b " style="left:34px;top:322px;width:1364px;height:23px;background:#0a4882"></div>
<div class="b" style="left:34px;top:322px;width:95px;height:23px;overflow:hidden">
<div class="b" style="left:0;top:0;width:79px;height:23px;overflow:hidden">
<span class="t " style="left:-12.07px;top:6.80px;font-size:11px;color:#fff;transform:scaleX(0.8973);font-weight:700;">Score With Auto Failure</span>
</div>
</div>
<div class="b " style="left:114.7px;top:328px;width:12.6px;height:12.6px;background:#fff;border-radius:2.500px;box-shadow:inset 0 0 0 .6px #b9a89c"></div>
<svg class="b" style="left:0;top:0" width="1440" height="777" viewBox="0 0 1440 777" fill="none"><path d="M118.70 333.70L121.00 336.10L123.30 333.70" stroke="#6a6a6a" stroke-width="1" stroke-linecap="round" stroke-linejoin="round"/></svg>
<div class="b" style="left:130px;top:322px;width:106px;height:23px;overflow:hidden">
<span class="t " style="left:11.75px;top:6.80px;font-size:11px;color:#fff;transform:scaleX(0.9081);font-weight:700;">Opportunity Type</span>
</div>
<div class="b " style="left:221.7px;top:328px;width:12.6px;height:12.6px;background:#fff;border-radius:2.500px;box-shadow:inset 0 0 0 .6px #b9a89c"></div>
<svg class="b" style="left:0;top:0" width="1440" height="777" viewBox="0 0 1440 777" fill="none"><path d="M225.70 333.70L228.00 336.10L230.30 333.70" stroke="#6a6a6a" stroke-width="1" stroke-linecap="round" stroke-linejoin="round"/></svg>
<div class="b" style="left:237px;top:322px;width:70px;height:23px;overflow:hidden">
<span class="t " style="left:14.00px;top:6.80px;font-size:11px;color:#fff;transform:scaleX(0.8809);font-weight:700;">Category</span>
</div>
<div class="b " style="left:292.7px;top:328px;width:12.6px;height:12.6px;background:#fff;border-radius:2.500px;box-shadow:inset 0 0 0 .6px #b9a89c"></div>
<svg class="b" style="left:0;top:0" width="1440" height="777" viewBox="0 0 1440 777" fill="none"><path d="M296.70 333.70L299.00 336.10L301.30 333.70" stroke="#6a6a6a" stroke-width="1" stroke-linecap="round" stroke-linejoin="round"/></svg>
<div class="b" style="left:308px;top:322px;width:339px;height:23px;overflow:hidden">
<span class="t " style="left:145.00px;top:6.80px;font-size:11px;color:#fff;transform:scaleX(0.9105);font-weight:700;">Parameter</span>
</div>
<div class="b " style="left:632.7px;top:328px;width:12.6px;height:12.6px;background:#fff;border-radius:2.500px;box-shadow:inset 0 0 0 .6px #b9a89c"></div>
<svg class="b" style="left:0;top:0" width="1440" height="777" viewBox="0 0 1440 777" fill="none"><path d="M636.70 333.70L639.00 336.10L641.30 333.70" stroke="#6a6a6a" stroke-width="1" stroke-linecap="round" stroke-linejoin="round"/></svg>
<div class="b" style="left:648px;top:322px;width:80px;height:23px;overflow:hidden">
<span class="t " style="left:21.00px;top:6.80px;font-size:11px;color:#fff;transform:scaleX(0.8877);font-weight:700;">Severity</span>
</div>
<div class="b " style="left:713.7px;top:328px;width:12.6px;height:12.6px;background:#fff;border-radius:2.500px;box-shadow:inset 0 0 0 .6px #b9a89c"></div>
<svg class="b" style="left:0;top:0" width="1440" height="777" viewBox="0 0 1440 777" fill="none"><path d="M717.70 333.70L720.00 336.10L722.30 333.70" stroke="#6a6a6a" stroke-width="1" stroke-linecap="round" stroke-linejoin="round"/></svg>
<div class="b" style="left:729px;top:322px;width:105px;height:23px;overflow:hidden">
<span class="t " style="left:11.00px;top:6.80px;font-size:11px;color:#fff;transform:scaleX(0.8873);font-weight:700;">Severity Category</span>
</div>
<div class="b " style="left:819.7px;top:328px;width:12.6px;height:12.6px;background:#fff;border-radius:2.500px;box-shadow:inset 0 0 0 .6px #b9a89c"></div>
<svg class="b" style="left:0;top:0" width="1440" height="777" viewBox="0 0 1440 777" fill="none"><path d="M823.70 333.70L826.00 336.10L828.30 333.70" stroke="#6a6a6a" stroke-width="1" stroke-linecap="round" stroke-linejoin="round"/></svg>
<div class="b" style="left:835px;top:322px;width:92px;height:23px;overflow:hidden">
<span class="t " style="left:10.00px;top:6.80px;font-size:11px;color:#fff;transform:scaleX(0.9129);font-weight:700;">Accept/Decline</span>
</div>
<div class="b " style="left:912.7px;top:328px;width:12.6px;height:12.6px;background:#fff;border-radius:2.500px;box-shadow:inset 0 0 0 .6px #b9a89c"></div>
<svg class="b" style="left:0;top:0" width="1440" height="777" viewBox="0 0 1440 777" fill="none"><path d="M916.70 333.70L919.00 336.10L921.30 333.70" stroke="#6a6a6a" stroke-width="1" stroke-linecap="round" stroke-linejoin="round"/></svg>
<div class="b" style="left:928px;top:322px;width:92px;height:23px;overflow:hidden">
<span class="t " style="left:10.50px;top:6.80px;font-size:11px;color:#fff;transform:scaleX(0.9007);font-weight:700;">Follow-up Date</span>
</div>
<div class="b " style="left:1005.7px;top:328px;width:12.6px;height:12.6px;background:#fff;border-radius:2.500px;box-shadow:inset 0 0 0 .6px #b9a89c"></div>
<svg class="b" style="left:0;top:0" width="1440" height="777" viewBox="0 0 1440 777" fill="none"><path d="M1009.70 333.70L1012.00 336.10L1014.30 333.70" stroke="#6a6a6a" stroke-width="1" stroke-linecap="round" stroke-linejoin="round"/></svg>
<div class="b" style="left:1021px;top:322px;width:70px;height:23px;overflow:hidden">
<span class="t " style="left:20.50px;top:6.80px;font-size:11px;color:#fff;transform:scaleX(0.8626);font-weight:700;">Status</span>
</div>
<div class="b " style="left:1076.7px;top:328px;width:12.6px;height:12.6px;background:#fff;border-radius:2.500px;box-shadow:inset 0 0 0 .6px #b9a89c"></div>
<svg class="b" style="left:0;top:0" width="1440" height="777" viewBox="0 0 1440 777" fill="none"><path d="M1080.70 333.70L1083.00 336.10L1085.30 333.70" stroke="#6a6a6a" stroke-width="1" stroke-linecap="round" stroke-linejoin="round"/></svg>
<div class="b" style="left:1092px;top:322px;width:121px;height:23px;overflow:hidden">
<span class="t " style="left:11.50px;top:6.80px;font-size:11px;color:#fff;transform:scaleX(0.8908);font-weight:700;">Coaching Completed</span>
</div>
<div class="b " style="left:1198.7px;top:328px;width:12.6px;height:12.6px;background:#fff;border-radius:2.500px;box-shadow:inset 0 0 0 .6px #b9a89c"></div>
<svg class="b" style="left:0;top:0" width="1440" height="777" viewBox="0 0 1440 777" fill="none"><path d="M1202.70 333.70L1205.00 336.10L1207.30 333.70" stroke="#6a6a6a" stroke-width="1" stroke-linecap="round" stroke-linejoin="round"/></svg>
<div class="b" style="left:1214px;top:322px;width:118px;height:23px;overflow:hidden">
<span class="t " style="left:12.50px;top:6.80px;font-size:11px;color:#fff;transform:scaleX(0.9003);font-weight:700;">Improvement in KPI</span>
</div>
<div class="b " style="left:1317.7px;top:328px;width:12.6px;height:12.6px;background:#fff;border-radius:2.500px;box-shadow:inset 0 0 0 .6px #b9a89c"></div>
<svg class="b" style="left:0;top:0" width="1440" height="777" viewBox="0 0 1440 777" fill="none"><path d="M1321.70 333.70L1324.00 336.10L1326.30 333.70" stroke="#6a6a6a" stroke-width="1" stroke-linecap="round" stroke-linejoin="round"/></svg>
<div class="b" style="left:1333px;top:322px;width:65px;height:23px;overflow:hidden">
<span class="t " style="left:10.50px;top:6.80px;font-size:11px;color:#fff;transform:scaleX(0.8670);font-weight:700;">Feedback</span>
</div>
<div class="b " style="left:1383.7px;top:328px;width:12.6px;height:12.6px;background:#fff;border-radius:2.500px;box-shadow:inset 0 0 0 .6px #b9a89c"></div>
<svg class="b" style="left:0;top:0" width="1440" height="777" viewBox="0 0 1440 777" fill="none"><path d="M1387.70 333.70L1390.00 336.10L1392.30 333.70" stroke="#6a6a6a" stroke-width="1" stroke-linecap="round" stroke-linejoin="round"/></svg>
<div class="b " style="left:34px;top:346px;width:1364px;height:22px;background:#dce6f1"></div>
<div class="b" style="left:130px;top:346px;width:106px;height:22px;overflow:hidden">
<span class="t " style="left:1.80px;top:5.80px;font-size:11px;color:#000;transform:scaleX(1.0288);">Opportunity</span>
</div>
<div class="b" style="left:237px;top:346px;width:70px;height:22px;overflow:hidden">
<span class="t " style="left:1.80px;top:5.80px;font-size:11px;color:#000;transform:scaleX(0.9245);">Close</span>
</div>
<div class="b" style="left:308px;top:346px;width:339px;height:22px;overflow:hidden">
<span class="t " style="left:1.80px;top:5.80px;font-size:11px;color:#000;transform:scaleX(0.9765);">Did the agent share the ticket number regarding the call?</span>
</div>
<div class="b" style="left:648px;top:346px;width:80px;height:22px;overflow:hidden">
<span class="t " style="left:1.80px;top:5.80px;font-size:11px;color:#000;transform:scaleX(0.9391);">Severity Level 0</span>
</div>
<div class="b" style="left:835px;top:346px;width:92px;height:22px;overflow:hidden">
<span class="t " style="left:1.80px;top:5.80px;font-size:11px;color:#000;transform:scaleX(0.9413);">Pending</span>
</div>
<div class="b" style="left:928px;top:346px;width:92px;height:22px;overflow:hidden">
<span class="t " style="left:1.80px;top:5.80px;font-size:11px;color:#000;transform:scaleX(0.9538);">10-23-25</span>
</div>
<div class="b" style="left:1333px;top:346px;width:65px;height:22px;overflow:hidden">
<span class="t " style="left:1.80px;top:5.80px;font-size:11px;color:#000;transform:scaleX(1.0091);">work on it</span>
</div>
<div class="b " style="left:34px;top:369px;width:1364px;height:22px;background:#fff"></div>
<div class="b" style="left:237px;top:369px;width:70px;height:22px;overflow:hidden">
<span class="t " style="left:1.80px;top:5.80px;font-size:11px;color:#000;transform:scaleX(0.9526);">Discovery</span>
</div>
<div class="b" style="left:308px;top:369px;width:339px;height:22px;overflow:hidden">
<span class="t " style="left:1.80px;top:5.80px;font-size:11px;color:#000;transform:scaleX(0.9744);">Did the agent ask the right probing question to discover the issue?</span>
</div>
<div class="b" style="left:648px;top:369px;width:80px;height:22px;overflow:hidden">
<span class="t " style="left:1.80px;top:5.80px;font-size:11px;color:#000;transform:scaleX(0.9391);">Severity Level 0</span>
</div>
<div class="b " style="left:34px;top:392px;width:1364px;height:22px;background:#dce6f1"></div>
<div class="b" style="left:130px;top:392px;width:106px;height:22px;overflow:hidden">
<span class="t " style="left:1.80px;top:5.80px;font-size:11px;color:#000;transform:scaleX(0.9619);">Strength</span>
</div>
<div class="b" style="left:237px;top:392px;width:70px;height:22px;overflow:hidden">
<span class="t " style="left:1.80px;top:5.80px;font-size:11px;color:#000;transform:scaleX(1.0177);">Introduction</span>
</div>
<div class="b" style="left:308px;top:392px;width:339px;height:22px;overflow:hidden">
<span class="t " style="left:1.80px;top:5.80px;font-size:11px;color:#000;transform:scaleX(0.9716);">Did the agent give branded opening on the call?</span>
</div>
<div class="b " style="left:34px;top:415px;width:1364px;height:22px;background:#fff"></div>
<div class="b" style="left:130px;top:415px;width:106px;height:22px;overflow:hidden">
<span class="t " style="left:1.80px;top:6.80px;font-size:11px;color:#000;transform:scaleX(1.0288);">Opportunity</span>
</div>
<div class="b" style="left:237px;top:415px;width:70px;height:22px;overflow:hidden">
<span class="t " style="left:1.80px;top:6.80px;font-size:11px;color:#000;transform:scaleX(0.9526);">Discovery</span>
</div>
<div class="b" style="left:308px;top:415px;width:339px;height:22px;overflow:hidden">
<span class="t " style="left:1.80px;top:6.80px;font-size:11px;color:#000;transform:scaleX(0.9744);">Did the agent ask the right probing question to discover the issue?</span>
</div>
<div class="b" style="left:648px;top:415px;width:80px;height:22px;overflow:hidden">
<span class="t " style="left:1.80px;top:6.80px;font-size:11px;color:#000;transform:scaleX(0.9391);">Severity Level 0</span>
</div>
<div class="b" style="left:835px;top:415px;width:92px;height:22px;overflow:hidden">
<span class="t " style="left:1.80px;top:6.80px;font-size:11px;color:#000;transform:scaleX(0.9516);">Accept</span>
</div>
<div class="b" style="left:928px;top:415px;width:92px;height:22px;overflow:hidden">
<span class="t " style="left:1.80px;top:6.80px;font-size:11px;color:#000;transform:scaleX(0.9538);">10-23-25</span>
</div>
<div class="b" style="left:1333px;top:415px;width:65px;height:22px;overflow:hidden">
<span class="t " style="left:1.80px;top:6.80px;font-size:11px;color:#000;transform:scaleX(0.9750);">work</span>
</div>
<div class="b " style="left:34px;top:438px;width:1364px;height:23px;background:#dce6f1"></div>
<div class="b" style="left:237px;top:438px;width:70px;height:23px;overflow:hidden">
<span class="t " style="left:1.80px;top:6.80px;font-size:11px;color:#000;transform:scaleX(0.9245);">Close</span>
</div>
<div class="b" style="left:308px;top:438px;width:339px;height:23px;overflow:hidden">
<span class="t " style="left:1.80px;top:6.80px;font-size:11px;color:#000;transform:scaleX(0.9841);">Was the customer satisfied with the interaction on this call?</span>
</div>
<div class="b" style="left:648px;top:438px;width:80px;height:23px;overflow:hidden">
<span class="t " style="left:1.80px;top:6.80px;font-size:11px;color:#000;transform:scaleX(0.9391);">Severity Level 0</span>
</div>
<div class="b " style="left:34px;top:462px;width:1364px;height:22px;background:#fff"></div>
<div class="b" style="left:130px;top:462px;width:106px;height:22px;overflow:hidden">
<span class="t " style="left:1.80px;top:5.80px;font-size:11px;color:#000;transform:scaleX(0.9619);">Strength</span>
</div>
<div class="b" style="left:237px;top:462px;width:70px;height:22px;overflow:hidden">
<span class="t " style="left:1.80px;top:5.80px;font-size:11px;color:#000;transform:scaleX(1.0177);">Introduction</span>
</div>
<div class="b" style="left:308px;top:462px;width:339px;height:22px;overflow:hidden">
<span class="t " style="left:1.80px;top:5.80px;font-size:11px;color:#000;transform:scaleX(0.9750);">Did the agent ask the name of the caller?</span>
</div>
<div class="b " style="left:34px;top:485px;width:1364px;height:22px;background:#dce6f1"></div>
<div class="b" style="left:130px;top:485px;width:106px;height:22px;overflow:hidden">
<span class="t " style="left:1.80px;top:5.80px;font-size:11px;color:#000;transform:scaleX(1.0288);">Opportunity</span>
</div>
<div class="b" style="left:237px;top:485px;width:70px;height:22px;overflow:hidden">
<span class="t " style="left:1.80px;top:5.80px;font-size:11px;color:#000;transform:scaleX(1.0177);">Introduction</span>
</div>
<div class="b" style="left:308px;top:485px;width:339px;height:22px;overflow:hidden">
<span class="t " style="left:1.80px;top:5.80px;font-size:11px;color:#000;transform:scaleX(0.9716);">Did the agent give branded opening on the call?</span>
</div>
<div class="b" style="left:648px;top:485px;width:80px;height:22px;overflow:hidden">
<span class="t " style="left:1.80px;top:5.80px;font-size:11px;color:#000;transform:scaleX(0.9391);">Severity Level 0</span>
</div>
<div class="b" style="left:835px;top:485px;width:92px;height:22px;overflow:hidden">
<span class="t " style="left:1.80px;top:5.80px;font-size:11px;color:#000;transform:scaleX(0.9413);">Pending</span>
</div>
<div class="b" style="left:928px;top:485px;width:92px;height:22px;overflow:hidden">
<span class="t " style="left:1.80px;top:5.80px;font-size:11px;color:#000;transform:scaleX(0.9750);">11-28-25</span>
</div>
<div class="b" style="left:1333px;top:485px;width:65px;height:22px;overflow:hidden">
<span class="t " style="left:1.80px;top:5.80px;font-size:11px;color:#000;transform:scaleX(0.9750);">work</span>
</div>
<div class="b " style="left:34px;top:508px;width:1364px;height:22px;background:#fff"></div>
<div class="b" style="left:130px;top:508px;width:106px;height:22px;overflow:hidden">
<span class="t " style="left:1.80px;top:6.80px;font-size:11px;color:#000;transform:scaleX(0.9619);">Strength</span>
</div>
<div class="b" style="left:237px;top:508px;width:70px;height:22px;overflow:hidden">
<span class="t " style="left:1.80px;top:6.80px;font-size:11px;color:#000;transform:scaleX(0.9245);">Close</span>
</div>
<div class="b" style="left:308px;top:508px;width:339px;height:22px;overflow:hidden">
<span class="t " style="left:1.80px;top:6.80px;font-size:11px;color:#000;transform:scaleX(0.9841);">Was the customer satisfied with the interaction on this call?</span>
</div>
<div class="b " style="left:34px;top:531px;width:1364px;height:22px;background:#dce6f1"></div>
<div class="b" style="left:130px;top:531px;width:106px;height:22px;overflow:hidden">
<span class="t " style="left:1.80px;top:6.80px;font-size:11px;color:#000;transform:scaleX(1.0288);">Opportunity</span>
</div>
<div class="b" style="left:237px;top:531px;width:70px;height:22px;overflow:hidden">
<span class="t " style="left:1.80px;top:6.80px;font-size:11px;color:#000;transform:scaleX(0.9750);">test category</span>
</div>
<div class="b" style="left:308px;top:531px;width:339px;height:22px;overflow:hidden">
<span class="t " style="left:1.80px;top:6.80px;font-size:11px;color:#000;transform:scaleX(0.9750);">Question 1</span>
</div>
<div class="b" style="left:648px;top:531px;width:80px;height:22px;overflow:hidden">
<span class="t " style="left:1.80px;top:6.80px;font-size:11px;color:#000;transform:scaleX(0.9391);">Severity Level 0</span>
</div>
<div class="b" style="left:835px;top:531px;width:92px;height:22px;overflow:hidden">
<span class="t " style="left:1.80px;top:6.80px;font-size:11px;color:#000;transform:scaleX(0.9413);">Pending</span>
</div>
<div class="b" style="left:928px;top:531px;width:92px;height:22px;overflow:hidden">
<span class="t " style="left:1.80px;top:6.80px;font-size:11px;color:#000;transform:scaleX(0.9750);">11-28-25</span>
</div>
<div class="b" style="left:1333px;top:531px;width:65px;height:22px;overflow:hidden">
<span class="t " style="left:1.80px;top:6.80px;font-size:11px;color:#000;transform:scaleX(0.9750);">work</span>
</div>
<div class="b " style="left:34px;top:554px;width:1364px;height:23px;background:#fff"></div>
<div class="b" style="left:130px;top:554px;width:106px;height:23px;overflow:hidden">
<span class="t " style="left:1.80px;top:6.80px;font-size:11px;color:#000;transform:scaleX(0.9619);">Strength</span>
</div>
<div class="b" style="left:237px;top:554px;width:70px;height:23px;overflow:hidden">
<span class="t " style="left:1.80px;top:6.80px;font-size:11px;color:#000;transform:scaleX(1.0177);">Introduction</span>
</div>
<div class="b" style="left:308px;top:554px;width:339px;height:23px;overflow:hidden">
<span class="t " style="left:1.80px;top:6.80px;font-size:11px;color:#000;transform:scaleX(0.9750);">Did the agent ask the name of the caller?</span>
</div>
<div class="b " style="left:34px;top:578px;width:1364px;height:22px;background:#dce6f1"></div>
<div class="b" style="left:130px;top:578px;width:106px;height:22px;overflow:hidden">
<span class="t " style="left:1.80px;top:5.80px;font-size:11px;color:#000;transform:scaleX(1.0288);">Opportunity</span>
</div>
<div class="b" style="left:237px;top:578px;width:70px;height:22px;overflow:hidden">
<span class="t " style="left:1.80px;top:5.80px;font-size:11px;color:#000;transform:scaleX(0.9245);">Close</span>
</div>
<div class="b" style="left:308px;top:578px;width:339px;height:22px;overflow:hidden">
<span class="t " style="left:1.80px;top:5.80px;font-size:11px;color:#000;transform:scaleX(0.9841);">Was the customer satisfied with the interaction on this call?</span>
</div>
<div class="b" style="left:648px;top:578px;width:80px;height:22px;overflow:hidden">
<span class="t " style="left:1.80px;top:5.80px;font-size:11px;color:#000;transform:scaleX(0.9391);">Severity Level 0</span>
</div>
<div class="b" style="left:835px;top:578px;width:92px;height:22px;overflow:hidden">
<span class="t " style="left:1.80px;top:5.80px;font-size:11px;color:#000;transform:scaleX(0.9413);">Pending</span>
</div>
<div class="b" style="left:928px;top:578px;width:92px;height:22px;overflow:hidden">
<span class="t " style="left:1.80px;top:5.80px;font-size:11px;color:#000;transform:scaleX(0.9750);">12-09-25</span>
</div>
<div class="b" style="left:1333px;top:578px;width:65px;height:22px;overflow:hidden">
<span class="t " style="left:1.80px;top:5.80px;font-size:11px;color:#000;transform:scaleX(0.9750);">work</span>
</div>
<div class="b " style="left:34px;top:601px;width:1364px;height:22px;background:#fff"></div>
<div class="b" style="left:130px;top:601px;width:106px;height:22px;overflow:hidden">
<span class="t " style="left:1.80px;top:6.80px;font-size:11px;color:#000;transform:scaleX(0.9619);">Strength</span>
</div>
<div class="b" style="left:237px;top:601px;width:70px;height:22px;overflow:hidden">
<span class="t " style="left:1.80px;top:6.80px;font-size:11px;color:#000;transform:scaleX(0.9526);">Discovery</span>
</div>
<div class="b" style="left:308px;top:601px;width:339px;height:22px;overflow:hidden">
<span class="t " style="left:1.80px;top:6.80px;font-size:11px;color:#000;transform:scaleX(0.9744);">Did the agent ask the right probing question to discover the issue?</span>
</div>
<div class="b " style="left:34px;top:624px;width:1364px;height:22px;background:#dce6f1"></div>
<div class="b" style="left:130px;top:624px;width:106px;height:22px;overflow:hidden">
<span class="t " style="left:1.80px;top:6.80px;font-size:11px;color:#000;transform:scaleX(1.0288);">Opportunity</span>
</div>
<div class="b" style="left:237px;top:624px;width:70px;height:22px;overflow:hidden">
<span class="t " style="left:1.80px;top:6.80px;font-size:11px;color:#000;transform:scaleX(0.9245);">Close</span>
</div>
<div class="b" style="left:308px;top:624px;width:339px;height:22px;overflow:hidden">
<span class="t " style="left:1.80px;top:6.80px;font-size:11px;color:#000;transform:scaleX(0.9841);">Was the customer satisfied with the interaction on this call?</span>
</div>
<div class="b" style="left:648px;top:624px;width:80px;height:22px;overflow:hidden">
<span class="t " style="left:1.80px;top:6.80px;font-size:11px;color:#000;transform:scaleX(0.9391);">Severity Level 0</span>
</div>
<div class="b" style="left:835px;top:624px;width:92px;height:22px;overflow:hidden">
<span class="t " style="left:1.80px;top:6.80px;font-size:11px;color:#000;transform:scaleX(0.9750);">Decline</span>
</div>
<div class="b" style="left:928px;top:624px;width:92px;height:22px;overflow:hidden">
<span class="t " style="left:1.80px;top:6.80px;font-size:11px;color:#000;transform:scaleX(0.9750);">12-09-25</span>
</div>
<div class="b" style="left:1021px;top:624px;width:70px;height:22px;overflow:hidden">
<span class="t " style="left:1.80px;top:6.80px;font-size:11px;color:#000;transform:scaleX(0.9249);">Unsuccessful</span>
</div>
<div class="b" style="left:1092px;top:624px;width:121px;height:22px;overflow:hidden">
<span class="t " style="left:1.80px;top:6.80px;font-size:11px;color:#000;transform:scaleX(1.0081);">12/08/2025</span>
</div>
<div class="b" style="left:1214px;top:624px;width:118px;height:22px;overflow:hidden">
<span class="t " style="left:1.80px;top:6.80px;font-size:11px;color:#000;transform:scaleX(0.9610);">decline</span>
</div>
<div class="b" style="left:1333px;top:624px;width:65px;height:22px;overflow:hidden">
<span class="t " style="left:1.80px;top:6.80px;font-size:11px;color:#000;transform:scaleX(0.9893);">working</span>
</div>
<div class="b " style="left:34px;top:647px;width:1364px;height:22px;background:#fff"></div>
<div class="b" style="left:130px;top:647px;width:106px;height:22px;overflow:hidden">
<span class="t " style="left:1.80px;top:6.80px;font-size:11px;color:#000;transform:scaleX(0.9619);">Strength</span>
</div>
<div class="b" style="left:237px;top:647px;width:70px;height:22px;overflow:hidden">
<span class="t " style="left:1.80px;top:6.80px;font-size:11px;color:#000;transform:scaleX(0.9347);">Call Details</span>
</div>
<div class="b" style="left:308px;top:647px;width:339px;height:22px;overflow:hidden">
<span class="t " style="left:1.80px;top:6.80px;font-size:11px;color:#000;transform:scaleX(0.9750);">Call-ID</span>
</div>
<div class="b " style="left:34px;top:670px;width:1364px;height:23px;background:#dce6f1"></div>
<div class="b" style="left:130px;top:670px;width:106px;height:23px;overflow:hidden">
<span class="t " style="left:1.80px;top:6.80px;font-size:11px;color:#000;transform:scaleX(1.0288);">Opportunity</span>
</div>
<div class="b" style="left:237px;top:670px;width:70px;height:23px;overflow:hidden">
<span class="t " style="left:1.80px;top:6.80px;font-size:11px;color:#000;transform:scaleX(0.9245);">Close</span>
</div>
<div class="b" style="left:308px;top:670px;width:339px;height:23px;overflow:hidden">
<span class="t " style="left:1.80px;top:6.80px;font-size:11px;color:#000;transform:scaleX(0.9841);">Was the customer satisfied with the interaction on this call?</span>
</div>
<div class="b" style="left:648px;top:670px;width:80px;height:23px;overflow:hidden">
<span class="t " style="left:1.80px;top:6.80px;font-size:11px;color:#000;transform:scaleX(0.9391);">Severity Level 0</span>
</div>
<div class="b" style="left:835px;top:670px;width:92px;height:23px;overflow:hidden">
<span class="t " style="left:1.80px;top:6.80px;font-size:11px;color:#000;transform:scaleX(0.9516);">Accept</span>
</div>
<div class="b" style="left:928px;top:670px;width:92px;height:23px;overflow:hidden">
<span class="t " style="left:1.80px;top:6.80px;font-size:11px;color:#000;transform:scaleX(0.9750);">12-09-25</span>
</div>
<div class="b" style="left:1021px;top:670px;width:70px;height:23px;overflow:hidden">
<span class="t " style="left:1.80px;top:6.80px;font-size:11px;color:#000;transform:scaleX(0.9750);">Completed</span>
</div>
<div class="b" style="left:1092px;top:670px;width:121px;height:23px;overflow:hidden">
<span class="t " style="left:1.80px;top:6.80px;font-size:11px;color:#000;transform:scaleX(1.0081);">12/08/2025</span>
</div>
<div class="b" style="left:1214px;top:670px;width:118px;height:23px;overflow:hidden">
<span class="t " style="left:1.80px;top:6.80px;font-size:11px;color:#000;transform:scaleX(0.9750);">accept</span>
</div>
<div class="b" style="left:1333px;top:670px;width:65px;height:23px;overflow:hidden">
<span class="t " style="left:1.80px;top:6.80px;font-size:11px;color:#000;transform:scaleX(0.9750);">work</span>
</div>
<div class="b " style="left:34px;top:694px;width:1364px;height:22px;background:#fff"></div>
<div class="b" style="left:130px;top:694px;width:106px;height:22px;overflow:hidden">
<span class="t " style="left:1.80px;top:5.80px;font-size:11px;color:#000;transform:scaleX(0.9619);">Strength</span>
</div>
<div class="b" style="left:237px;top:694px;width:70px;height:22px;overflow:hidden">
<span class="t " style="left:1.80px;top:5.80px;font-size:11px;color:#000;transform:scaleX(1.0177);">Introduction</span>
</div>
<div class="b" style="left:308px;top:694px;width:339px;height:22px;overflow:hidden">
<span class="t " style="left:1.80px;top:5.80px;font-size:11px;color:#000;transform:scaleX(0.9762);">Did the agent verify the account?</span>
</div>
<div class="b " style="left:34px;top:717px;width:1364px;height:1px;background:#dce6f1"></div>
<div class="b " style="left:34px;top:321px;width:1365px;height:1px;background:#000"></div>
<div class="b " style="left:34px;top:345px;width:1365px;height:1px;background:#000"></div>
<div class="b " style="left:34px;top:368px;width:1365px;height:1px;background:#000"></div>
<div class="b " style="left:34px;top:391px;width:1365px;height:1px;background:#000"></div>
<div class="b " style="left:34px;top:414px;width:1365px;height:1px;background:#000"></div>
<div class="b " style="left:34px;top:437px;width:1365px;height:1px;background:#000"></div>
<div class="b " style="left:34px;top:461px;width:1365px;height:1px;background:#000"></div>
<div class="b " style="left:34px;top:484px;width:1365px;height:1px;background:#000"></div>
<div class="b " style="left:34px;top:507px;width:1365px;height:1px;background:#000"></div>
<div class="b " style="left:34px;top:530px;width:1365px;height:1px;background:#000"></div>
<div class="b " style="left:34px;top:553px;width:1365px;height:1px;background:#000"></div>
<div class="b " style="left:34px;top:577px;width:1365px;height:1px;background:#000"></div>
<div class="b " style="left:34px;top:600px;width:1365px;height:1px;background:#000"></div>
<div class="b " style="left:34px;top:623px;width:1365px;height:1px;background:#000"></div>
<div class="b " style="left:34px;top:646px;width:1365px;height:1px;background:#000"></div>
<div class="b " style="left:34px;top:669px;width:1365px;height:1px;background:#000"></div>
<div class="b " style="left:34px;top:693px;width:1365px;height:1px;background:#000"></div>
<div class="b " style="left:34px;top:716px;width:1365px;height:1px;background:#000"></div>
<div class="b " style="left:129px;top:321px;width:1px;height:397px;background:#000"></div>
<div class="b " style="left:236px;top:321px;width:1px;height:397px;background:#000"></div>
<div class="b " style="left:307px;top:321px;width:1px;height:397px;background:#000"></div>
<div class="b " style="left:647px;top:321px;width:1px;height:397px;background:#000"></div>
<div class="b " style="left:728px;top:321px;width:1px;height:397px;background:#000"></div>
<div class="b " style="left:834px;top:321px;width:1px;height:397px;background:#000"></div>
<div class="b " style="left:927px;top:321px;width:1px;height:397px;background:#000"></div>
<div class="b " style="left:1020px;top:321px;width:1px;height:397px;background:#000"></div>
<div class="b " style="left:1091px;top:321px;width:1px;height:397px;background:#000"></div>
<div class="b " style="left:1213px;top:321px;width:1px;height:397px;background:#000"></div>
<div class="b " style="left:1332px;top:321px;width:1px;height:397px;background:#000"></div>
<div class="b " style="left:1398px;top:321px;width:1px;height:397px;background:#000"></div>
<span class="t " style="left:174.50px;top:201.30px;font-size:14px;color:#000;transform:scaleX(0.9308);font-weight:700;">Coaching Level Tactical</span>
<div class="b " style="left:1425px;top:172px;width:15px;height:560px;background:#fafafa"></div>
<div class="b " style="left:1425px;top:172px;width:1px;height:546px;background:#f0f0f0"></div>
<div class="b " style="left:1429px;top:175px;width:8px;height:269px;background:#c1c1c1;border-radius:4px"></div>
<div class="b " style="left:0px;top:718px;width:1426px;height:14px;background:#fafafa"></div>
<div class="b " style="left:314px;top:722px;width:468px;height:8px;background:#c1c1c1;border-radius:4px"></div>
<div class="b " style="left:0px;top:732px;width:1440px;height:26px;background:#f5f5f5"></div>
<svg class="b" style="left:9px;top:740px;" width="8" height="10" viewBox="0 0 8 10" fill="none"><path d="M5.800 1L1.500 5l4.300 4" stroke="#c4c4c4" stroke-width="1" stroke-linecap="round" stroke-linejoin="round"/></svg>
<svg class="b" style="left:35px;top:740px;" width="8" height="10" viewBox="0 0 8 10" fill="none"><path d="M2.200 1l4.300 4-4.300 4" stroke="#c4c4c4" stroke-width="1" stroke-linecap="round" stroke-linejoin="round"/></svg>
<svg class="b" style="left:58.5px;top:740.5px;" width="10" height="9" viewBox="0 0 10 9" fill="none"><path d="M.5 1h9M.5 4.500h9M.5 8h9" stroke="#c4c4c4" stroke-width="1" stroke-linecap="round"/></svg>
<span class="t " style="left:84.00px;top:739.30px;font-size:12px;color:#404040;transform:scaleX(0.8740);font-weight:700;">CoachingLevelTacticalreport Dat</span>
<div class="b " style="left:84px;top:755.8px;width:163px;height:2.2px;background:#107c41;border-radius:1px"></div>
<svg class="b" style="left:262px;top:740.5px;" width="10" height="10" viewBox="0 0 10 10" fill="none"><path d="M5 .5v9M.5 5h9" stroke="#c4c4c4" stroke-width="1" stroke-linecap="round"/></svg>
<div class="b " style="left:0px;top:758px;width:1440px;height:19px;background:#fff"></div>
<div class="b " style="left:0px;top:758px;width:1440px;height:1px;background:#e0e0e0"></div>
<div class="b " style="left:11px;top:761px;width:93px;height:16px;background:#f0f0f0"></div>
<span class="t " style="left:16.50px;top:764.80px;font-size:10px;color:#b4b4b4;transform:scaleX(0.9415);">Workbook Statistics</span>
<div class="b " style="left:1216px;top:759px;width:13px;height:18px;background:#f0f0f0"></div>
<div class="b " style="left:1232px;top:759px;width:23px;height:18px;background:#f0f0f0"></div>
<div class="b " style="left:1258px;top:759px;width:22px;height:18px;background:#f0f0f0"></div>
<div class="b " style="left:1283px;top:759px;width:22.5px;height:18px;background:#f0f0f0"></div>
<div class="b " style="left:1309px;top:759px;width:94px;height:18px;background:#f0f0f0"></div>
<div class="b " style="left:1406px;top:759px;width:23px;height:18px;background:#f0f0f0"></div>
<svg class="b" style="left:0;top:0" width="1440" height="777" viewBox="0 0 1440 777" fill="none"><path d="M1219.10 768.30L1222.20 771.70L1225.30 768.30" stroke="#b4b4b4" stroke-width="1.1" stroke-linecap="round" stroke-linejoin="round"/></svg>
<svg class="b" style="left:1238px;top:765px;" width="11" height="8.5" viewBox="0 0 11 8.5" fill="none"><rect x=".5" y=".5" width="10" height="7.3" rx="1.300" fill="#dadada" stroke="#b4b4b4" stroke-width="1"/><path d="M2.300 2.800h.8M4.100 2.800h.8M5.900 2.800h.8M7.700 2.800h.8M2.300 4.300h.8M4.100 4.300h.8M5.900 4.300h.8M7.700 4.300h.8" stroke="#fff" stroke-width=".9"/><path d="M3 6h5" stroke="#8f8f8f" stroke-width=".9"/></svg>
<svg class="b" style="left:1264.5px;top:764.5px;" width="9.6" height="9.6" viewBox="0 0 9.6 9.6" fill="none"><circle cx="4.800" cy="4.800" r="4.200" stroke="#a8a8a8" stroke-width="1"/><path d="M3.600 3.800a1.200 1.200 0 1 1 1.900 1c-.5.300-.7.600-.7 1" stroke="#a8a8a8" stroke-width=".9" stroke-linecap="round"/><circle cx="4.800" cy="7.100" r=".55" fill="#a8a8a8"/></svg>
<svg class="b" style="left:1289px;top:763.8px;" width="11.5" height="10.5" viewBox="0 0 11.5 10.5" fill="none"><circle cx="2.900" cy="4.600" r="1.500" stroke="#a8a8a8" stroke-width=".9"/><rect x=".5" y="7" width="4.800" height="2.900" rx="1.400" stroke="#a8a8a8" stroke-width=".9"/><path d="M5.800.5h4.400a.7.700 0 0 1 .7.700v2.200a.7.700 0 0 1-.7.700H8.300L6.900 5.200V4.100H5.800a.7.700 0 0 1-.7-.7V1.200a.7.700 0 0 1 .7-.7z" stroke="#a8a8a8" stroke-width=".9" stroke-linejoin="round"/></svg>
<svg class="b" style="left:1314.5px;top:768.3px;" width="10" height="2" viewBox="0 0 10 2" fill="none"><path d="M.5 1h9" stroke="#b4b4b4" stroke-width="1.100" stroke-linecap="round"/></svg>
<div class="b " style="left:1333.3px;top:761px;width:45.5px;height:13.5px;border:1px solid #d4d4d4;border-radius:3px"></div>
<span class="t " style="left:1337.50px;top:764.05px;font-size:9.5px;color:#c2c2c2;transform:scaleX(0.9260);">100%</span>
<svg class="b" style="left:0;top:0" width="1440" height="777" viewBox="0 0 1440 777" fill="none"><path d="M1365.20 767.00L1369.40 771.00L1373.60 767.00" stroke="#b4b4b4" stroke-width="1" stroke-linecap="round" stroke-linejoin="round"/></svg>
<svg class="b" style="left:1386.5px;top:764.5px;" width="10" height="10" viewBox="0 0 10 10" fill="none"><path d="M5 .5v9M.5 5h9" stroke="#a8a8a8" stroke-width="1.100" stroke-linecap="round"/></svg>
<svg class="b" style="left:1411.5px;top:763px;" width="11.5" height="10.5" viewBox="0 0 11.5 10.5" fill="none"><path d="M.6 3.300V1.800A1.200 1.200 0 0 1 1.800.6h1.800M7.900.6h1.800a1.200 1.200 0 0 1 1.200 1.200v1.500M10.900 7.200v1.500a1.200 1.200 0 0 1-1.200 1.200H7.900M3.600 9.900H1.800A1.200 1.200 0 0 1 .6 8.700V7.200" stroke="#a8a8a8" stroke-width="1.100" stroke-linecap="round"/></svg>
</div>
</body></html>
